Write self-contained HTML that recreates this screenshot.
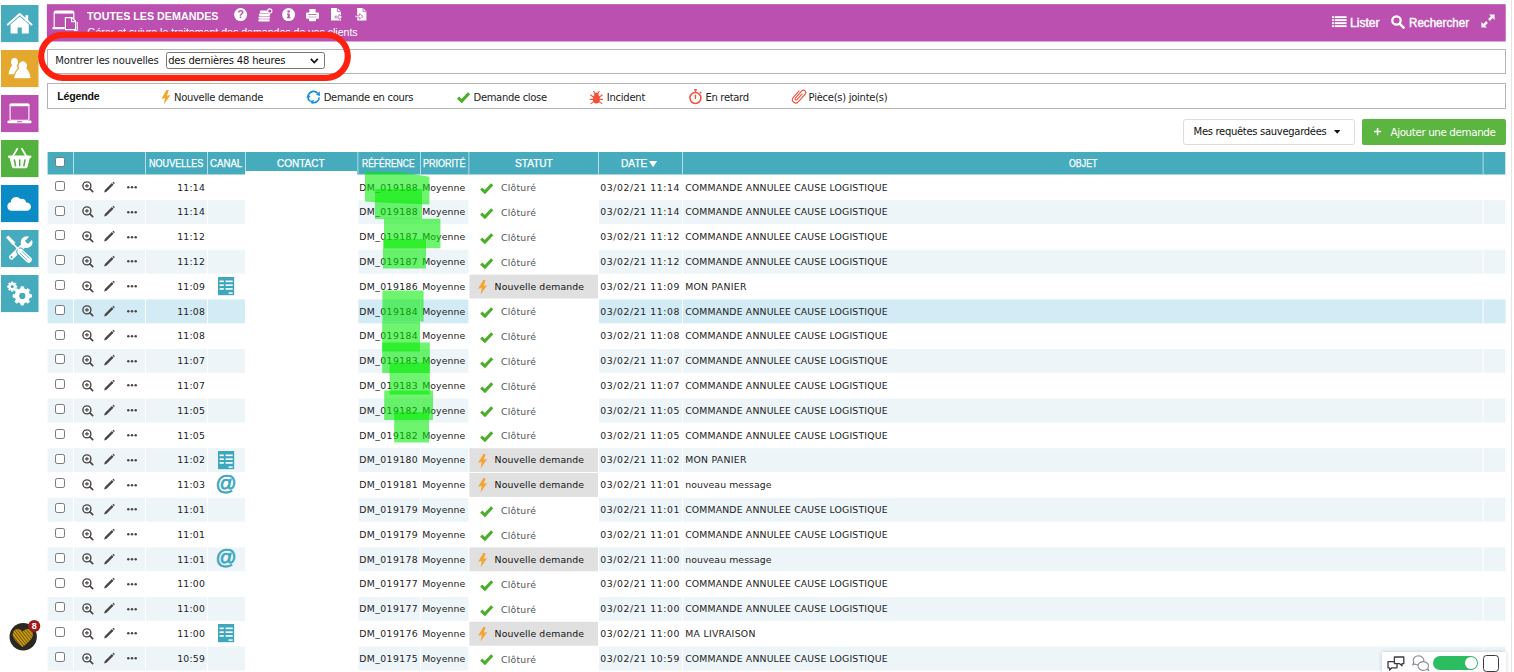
<!DOCTYPE html><html lang="fr"><head><meta charset="utf-8"><title>Toutes les demandes</title><style>html,body{margin:0;padding:0;background:#fff}body{width:1514px;height:672px;position:relative;overflow:hidden;font-family:"DejaVu Sans","Liberation Sans",sans-serif}.b{position:absolute}.t{position:absolute;white-space:nowrap;margin:0;padding:0}.i{position:absolute;overflow:visible}.cb{position:absolute;width:8.2px;height:8px;border:1.1px solid #7a7a7a;border-radius:2.2px;background:#fff}</style></head><body>
<nav>
<svg class="i" style="left:1.3px;top:5.20px" width="37.5" height="37.1" viewBox="0 0 37.5 37.1"><rect width="37.5" height="37.1" fill="#47abbe"/><path d="M6.9 19.6 L18.7 9 L30.5 19.6" fill="none" stroke="#fff" stroke-width="2" stroke-linecap="round" stroke-linejoin="round"/><path d="M9.6 19.4 L18.7 11.4 L27.8 19.4 V28.6 H20.8 V22.4 H16.6 V28.6 H9.6 Z" fill="#fff"/><rect x="24.4" y="10.2" width="2.8" height="6" fill="#fff"/></svg>
<svg class="i" style="left:1.3px;top:50.13px" width="37.5" height="37.1" viewBox="0 0 37.5 37.1"><rect width="37.5" height="37.1" fill="#e5a82e"/><g fill="#fff"><ellipse cx="13.5" cy="11.9" rx="3.5" ry="3.9"/><path d="M7.6 24.2 C8.2 20 9.4 17 11.6 15 L16 15 L17 19 L13 24.2 Z"/></g><g fill="#fff" stroke="#e5a82e" stroke-width="1.1"><path d="M12.4 28.7 C13.2 24 14.8 20.6 17.8 18.2 A4.7 4.8 0 1 1 25.8 18.2 C28.4 20.6 29.6 24 30.2 28.7 Z"/></g></svg>
<svg class="i" style="left:1.3px;top:95.06px" width="37.5" height="37.1" viewBox="0 0 37.5 37.1"><rect width="37.5" height="37.1" fill="#bb50b0"/><rect x="9.1" y="9.2" width="18.8" height="16" rx="1.2" fill="none" stroke="#fff" stroke-width="1.1"/><rect x="8.6" y="8.6" width="19.8" height="2.6" rx="0.8" fill="#fff"/><rect x="6.4" y="25.5" width="24.2" height="2.7" rx="1.3" fill="#fff"/><rect x="16" y="26.3" width="5" height="1" fill="#b94fb0"/></svg>
<svg class="i" style="left:1.3px;top:139.99px" width="37.5" height="37.1" viewBox="0 0 37.5 37.1"><rect width="37.5" height="37.1" fill="#53b13f"/><path d="M11.6 16.8 L16.3 8.7 M25.6 16.8 L20.9 8.7" stroke="#fff" stroke-width="1.7" stroke-linecap="round" fill="none"/><path d="M8.2 15.6 H29.2 a1.25 1.25 0 0 1 0 2.5 H28.8 L26.6 26.8 a2 2 0 0 1 -1.9 1.5 H12.7 a2 2 0 0 1 -1.9 -1.5 L8.6 18.1 H8.2 a1.25 1.25 0 0 1 0 -2.5 Z" fill="#fff"/><path d="M13.4 20 L14.5 25.6 M18.7 20 V25.6 M24 20 L22.9 25.6" stroke="#53b13f" stroke-width="1.6" stroke-linecap="round"/></svg>
<svg class="i" style="left:1.3px;top:184.92px" width="37.5" height="37.1" viewBox="0 0 37.5 37.1"><rect width="37.5" height="37.1" fill="#0a8bc6"/><path d="M10.4 25.8 a4.3 4.3 0 0 1 -0.6 -8.5 a5.4 5.4 0 0 1 9.6 -3.2 a4 4 0 0 1 5.6 3.4 a4.2 4.2 0 0 1 1.4 8.3 Z" fill="#fff"/></svg>
<svg class="i" style="left:1.3px;top:229.85px" width="37.5" height="37.1" viewBox="0 0 37.5 37.1"><rect width="37.5" height="37.1" fill="#47abbe"/><path d="M10.6 27 L23 15" stroke="#fff" stroke-width="5" stroke-linecap="round"/><circle cx="25.6" cy="12.2" r="5.9" fill="#fff"/><path d="M25.4 12.4 L31.4 6.4" stroke="#47abbe" stroke-width="4.2"/><circle cx="10.5" cy="27.1" r="1.1" fill="#47abbe"/><path d="M19.4 21.8 L27.8 29.8" stroke="#47abbe" stroke-width="8" stroke-linecap="round"/><path d="M19.4 21.8 L27.8 29.8" stroke="#fff" stroke-width="6" stroke-linecap="round"/><path d="M20.6 21 L28.4 28.4 M18.8 23 L26.4 30.2" stroke="#47abbe" stroke-width="0.8"/><path d="M12.4 14 L18.4 20.4" stroke="#fff" stroke-width="1.7"/><path d="M5.4 7.4 L7.4 6 L13.9 12.6 L12 14.8 Z" fill="#fff" stroke="#fff" stroke-width="0.8" stroke-linejoin="round"/></svg>
<svg class="i" style="left:1.3px;top:274.78px" width="37.5" height="37.1" viewBox="0 0 37.5 37.1"><rect width="37.5" height="37.1" fill="#47abbe"/><path d="M14.71 10.81 L15.86 10.97 L15.86 12.23 L14.71 12.39 L14.24 13.53 L14.94 14.45 L14.05 15.34 L13.13 14.64 L11.99 15.11 L11.83 16.26 L10.57 16.26 L10.41 15.11 L9.27 14.64 L8.35 15.34 L7.46 14.45 L8.16 13.53 L7.69 12.39 L6.54 12.23 L6.54 10.97 L7.69 10.81 L8.16 9.67 L7.46 8.75 L8.35 7.86 L9.27 8.56 L10.41 8.09 L10.57 6.94 L11.83 6.94 L11.99 8.09 L13.13 8.56 L14.05 7.86 L14.94 8.75 L14.24 9.67Z" fill="#fff" stroke="#fff" stroke-width="0.8" stroke-linejoin="round"/><circle cx="11.2" cy="11.6" r="1.6" fill="#47abbe"/><path d="M28.42 19.31 L30.52 19.66 L30.52 22.14 L28.42 22.49 L27.46 24.81 L28.69 26.54 L26.94 28.29 L25.21 27.06 L22.89 28.02 L22.54 30.12 L20.06 30.12 L19.71 28.02 L17.39 27.06 L15.66 28.29 L13.91 26.54 L15.14 24.81 L14.18 22.49 L12.08 22.14 L12.08 19.66 L14.18 19.31 L15.14 16.99 L13.91 15.26 L15.66 13.51 L17.39 14.74 L19.71 13.78 L20.06 11.68 L22.54 11.68 L22.89 13.78 L25.21 14.74 L26.94 13.51 L28.69 15.26 L27.46 16.99Z" fill="#fff" stroke="#fff" stroke-width="0.8" stroke-linejoin="round"/><circle cx="21.3" cy="20.9" r="3.1" fill="#47abbe"/></svg>
</nav>
<header>
<svg class="i" style="left:0;top:0" width="1514" height="44" viewBox="0 0 1514 44"><rect x="46.9" y="4.2" width="1458.8" height="37.3" fill="#bb50b0"/></svg>
<svg class="i" style="left:52.2px;top:10.4px" width="27" height="25" viewBox="0 0 27 25" ><rect x="2.2" y="1" width="19.6" height="17" rx="1.6" fill="none" stroke="#fff" stroke-width="1.2"/><rect x="2.2" y="1" width="19.6" height="2.6" fill="#fff"/><rect x="0.4" y="17" width="12" height="2.2" rx="1" fill="#fff"/><path d="M13.4 7.6 H20 L23.6 11.2 V19.6 H13.4 Z" fill="#b94fb0" stroke="#fff" stroke-width="1.2" stroke-linejoin="round"/><path d="M19.6 7.8 V11.6 H23.4" fill="none" stroke="#fff" stroke-width="1.1"/><path d="M25.3 12 V20.6 H22" fill="none" stroke="#fff" stroke-width="1"/></svg>
<div class="t" style="left:87.2px;top:8px;line-height:16px;height:16px;font:bold 11.8px/16px 'Liberation Sans', sans-serif;color:#fff;transform:scaleX(0.9091);transform-origin:0 50%;">TOUTES LES DEMANDES</div>
<div class="t" style="left:87.2px;top:25.4px;line-height:14px;height:14px;font:10.6px/14px 'Liberation Sans', sans-serif;color:#fff;letter-spacing:-0.007px;">Gérer et suivre le traitement des demandes de vos clients</div>
<svg class="i" style="left:233.8px;top:8.1px" width="13.2" height="13.2" viewBox="0 0 13.2 13.2" ><circle cx="6.6" cy="6.6" r="6.5" fill="#fff"/><text x="6.6" y="10.4" text-anchor="middle" font-family="Liberation Sans, sans-serif" font-weight="bold" font-size="10.5" fill="#b94fb0">?</text></svg>
<svg class="i" style="left:258.4px;top:7.6px" width="14.2" height="13.4" viewBox="-0.2 -0.4 14.2 13.4" ><g fill="#fff"><rect x="1.6" y="2.2" width="9" height="2.4" rx="1.2"/><rect x="0.6" y="5.2" width="11.4" height="2.3" rx="1.1"/><rect x="0.2" y="8" width="11.8" height="2.3" rx="1.1"/><rect x="0" y="10.8" width="11.6" height="2.3" rx="1.1"/></g><circle cx="11.6" cy="2.6" r="2.1" fill="#b94fb0" stroke="#fff" stroke-width="1.1"/></svg>
<svg class="i" style="left:281.9px;top:8.1px" width="13.2" height="13.2" viewBox="0 0 13.2 13.2" ><circle cx="6.6" cy="6.6" r="6.5" fill="#fff"/><circle cx="6.6" cy="3.5" r="1.25" fill="#b94fb0"/><path d="M5.1 5.6 H7.7 V9 H8.4 V10.3 H4.9 V9 H5.7 V6.9 H5.1 Z" fill="#b94fb0"/></svg>
<svg class="i" style="left:306px;top:8.8px" width="13" height="12.2" viewBox="0 0 13 12.2" ><g fill="#fff"><rect x="3.4" y="0" width="6.2" height="4" /><rect x="0" y="3.6" width="13" height="6.2" rx="0.8"/><rect x="3" y="8" width="7" height="4.2"/></g><rect x="2.4" y="5" width="8.2" height="1" fill="#b94fb0" opacity="0.8"/><rect x="2.6" y="7.6" width="7.8" height="0.8" fill="#b94fb0" opacity="0.6"/></svg>
<svg class="i" style="left:331px;top:8.4px" width="12" height="12.4" viewBox="0 0 12 12.4" ><path d="M0 0 H6.4 L10 3.6 V12.4 H0 Z" fill="#fff"/><path d="M6.4 0 V3.6 H10" fill="none" stroke="#b94fb0" stroke-width="0.8"/><path d="M4 8.2 H8 V6.4 L11.6 9 L8 11.6 V9.8 H4 Z" fill="#fff" stroke="#b94fb0" stroke-width="0.7"/></svg>
<svg class="i" style="left:354.8px;top:8.4px" width="12" height="12.4" viewBox="0 0 12 12.4" ><path d="M2.2 0 H8 L11.4 3.4 V12.4 H2.2 Z" fill="#fff"/><path d="M8 0 V3.4 H11.4" fill="none" stroke="#b94fb0" stroke-width="0.8"/><path d="M0 7.6 H4.4 V5.6 L8.2 8.4 L4.4 11.2 V9.2 H0 Z" fill="#fff" stroke="#b94fb0" stroke-width="0.7"/></svg>
<svg class="i" style="left:1331.5px;top:16.1px" width="14.8" height="11.4" viewBox="0 0 14.8 11.4" ><rect x="0" y="0.2" width="1.9" height="1.9" fill="#fff"/><rect x="2.7" y="0.2" width="11.9" height="1.9" fill="#fff"/><rect x="0" y="3.2" width="1.9" height="1.9" fill="#fff"/><rect x="2.7" y="3.2" width="11.9" height="1.9" fill="#fff"/><rect x="0" y="6.2" width="1.9" height="1.9" fill="#fff"/><rect x="2.7" y="6.2" width="11.9" height="1.9" fill="#fff"/><rect x="0" y="9.2" width="1.9" height="1.9" fill="#fff"/><rect x="2.7" y="9.2" width="11.9" height="1.9" fill="#fff"/></svg>
<div class="t" style="left:1349.6px;top:13.8px;line-height:18px;height:18px;font:12px/18px 'Liberation Sans', sans-serif;color:#fff;transform:scaleX(1.0087);transform-origin:0 50%;-webkit-text-stroke:0.4px #fff;">Lister</div>
<svg class="i" style="left:1391px;top:14.6px" width="13.4" height="13.4" viewBox="0 0 13.4 13.4" ><circle cx="5.5" cy="5.5" r="4.2" fill="none" stroke="#fff" stroke-width="2.3"/><path d="M8.8 8.8 L12.6 12.6" stroke="#fff" stroke-width="2.6" stroke-linecap="round"/></svg>
<div class="t" style="left:1408.8px;top:13.8px;line-height:18px;height:18px;font:12px/18px 'Liberation Sans', sans-serif;color:#fff;transform:scaleX(0.9673);transform-origin:0 50%;-webkit-text-stroke:0.4px #fff;">Rechercher</div>
<svg class="i" style="left:1481.2px;top:14.2px" width="14" height="14" viewBox="0 0 14 14" ><g fill="#fff"><path d="M8 0.4 H13.6 V6 L11.7 4.1 L8.9 6.9 L7.1 5.1 L9.9 2.3 Z"/><path d="M6 13.6 H0.4 V8 L2.3 9.9 L5.1 7.1 L6.9 8.9 L4.1 11.7 Z"/></g></svg>
</header>
<section>
<div class="b" style="left:47.00px;top:48.70px;width:1457.00px;height:23.60px;background:#fff;border:1px solid #b4b4b4"></div>
<div class="t" style="left:55.3px;top:52.2px;line-height:17px;height:17px;font:10.0px/17px 'DejaVu Sans', 'Liberation Sans', sans-serif;color:#222;letter-spacing:-0.198px;">Montrer les nouvelles</div>
<div class="b" style="left:165.60px;top:52.20px;width:157.00px;height:14.60px;background:#fff;border:1px solid #777;border-radius:2.5px"></div>
<div class="t" style="left:168.2px;top:52.2px;line-height:17px;height:17px;font:10.0px/17px 'DejaVu Sans', 'Liberation Sans', sans-serif;color:#111;letter-spacing:-0.175px;">des dernières 48 heures</div>
<svg class="i" style="left:310.2px;top:57.6px" width="8.6" height="6" viewBox="0 0 8.6 6" ><path d="M0.8 0.9 L4.3 4.5 L7.8 0.9" fill="none" stroke="#111" stroke-width="1.7"/></svg>
</section>
<section>
<div class="b" style="left:47.00px;top:83.20px;width:1456.60px;height:23.80px;background:#fff;border:1px solid #b4b4b4"></div>
<div class="t" style="left:57.2px;top:87.6px;line-height:17px;height:17px;font:bold 10.6px/17px 'Liberation Sans', sans-serif;color:#111;letter-spacing:-0.166px;">Légende</div>
<svg class="i" style="left:160.5px;top:89.8px" width="9.8" height="14.4" viewBox="0 0 9.4 14.4" ><path d="M5.4 0 H7.6 L5.8 5.7 L9.3 5.1 L2.6 14.4 L3.8 8.1 L0.1 8.8 Z" fill="#f3a530"/></svg>
<div class="t" style="left:174px;top:88.8px;line-height:17px;height:17px;font:10.0px/17px 'DejaVu Sans', 'Liberation Sans', sans-serif;color:#222;letter-spacing:-0.319px;">Nouvelle demande</div>
<svg class="i" style="left:305.9px;top:90.2px" width="14.4" height="14.4" viewBox="-0.4 0 14.2 14.2" ><g fill="none" stroke="#1b8fd8" stroke-width="1.7"><path d="M2.2 4.6 A5.3 5.3 0 0 1 11.2 3.2"/><path d="M12.6 7.4 A5.3 5.3 0 0 1 6 12.2"/><path d="M3.6 11 A5.3 5.3 0 0 1 1.6 6.6"/></g><g fill="#1b8fd8"><path d="M9.4 4.6 L13.2 1.4 L13.4 6 Z"/><path d="M7.6 9.8 L5.8 14 L3.4 10.8 Z"/><path d="M0 8 L1.4 3.6 L4.2 7 Z"/></g></svg>
<div class="t" style="left:323.7px;top:88.8px;line-height:17px;height:17px;font:10.0px/17px 'DejaVu Sans', 'Liberation Sans', sans-serif;color:#222;letter-spacing:-0.33px;">Demande en cours</div>
<svg class="i" style="left:456.6px;top:92px" width="13" height="10.6" viewBox="0 0 13 10.6" ><path d="M1 5.6 L4.7 9.1 L12 1.2" fill="none" stroke="#4aae2a" stroke-width="3.1" stroke-linecap="butt" stroke-linejoin="miter"/></svg>
<div class="t" style="left:473.5px;top:88.8px;line-height:17px;height:17px;font:10.0px/17px 'DejaVu Sans', 'Liberation Sans', sans-serif;color:#222;letter-spacing:-0.323px;">Demande close</div>
<svg class="i" style="left:590.1px;top:91px" width="12.8" height="13.2" viewBox="0 0 12.8 13.2" ><ellipse cx="6.4" cy="8" rx="3.5" ry="4.6" fill="#f4503a"/><circle cx="6.4" cy="3.6" r="2.2" fill="#f4503a"/><g stroke="#f4503a" stroke-width="1.1" fill="none" stroke-linecap="round"><path d="M4.8 2.2 L3.6 0.4 M8 2.2 L9.2 0.4"/><path d="M3.4 6 L0.6 4 M9.4 6 L12.2 4"/><path d="M3 8.4 H0.2 M9.8 8.4 H12.6"/><path d="M3.6 10.6 L1 12.6 M9.2 10.6 L11.8 12.6"/></g></svg>
<div class="t" style="left:606.7px;top:88.8px;line-height:17px;height:17px;font:10.0px/17px 'DejaVu Sans', 'Liberation Sans', sans-serif;color:#222;letter-spacing:-0.241px;">Incident</div>
<svg class="i" style="left:688.8px;top:88.8px" width="12.8" height="15.2" viewBox="0 0 12.8 15.2" ><circle cx="6.4" cy="9" r="5.5" fill="none" stroke="#f4503a" stroke-width="1.5"/><rect x="5.2" y="0" width="2.6" height="1.6" fill="#f4503a"/><rect x="5.9" y="1.2" width="1.2" height="2" fill="#f4503a"/><path d="M11 3 L12.2 4.2" stroke="#f4503a" stroke-width="1.3"/><rect x="5.8" y="5.6" width="1.3" height="4.6" rx="0.6" fill="#f4503a"/></svg>
<div class="t" style="left:705.5px;top:88.8px;line-height:17px;height:17px;font:10.0px/17px 'DejaVu Sans', 'Liberation Sans', sans-serif;color:#222;letter-spacing:-0.335px;">En retard</div>
<svg class="i" style="left:791.2px;top:90px" width="14.8" height="13.6" viewBox="0 0 14.8 13.6" ><g transform="rotate(42 7.4 6.8)" fill="none" stroke="#f4503a" stroke-width="1.1"><path d="M4 1.6 V10.6 a3.3 3.3 0 0 0 6.6 0 V0.2 a2.3 2.3 0 0 0 -4.6 0 V9.8 a1.1 1.1 0 0 0 2.2 0 V1.8"/></g></svg>
<div class="t" style="left:808.6px;top:88.8px;line-height:17px;height:17px;font:10.0px/17px 'DejaVu Sans', 'Liberation Sans', sans-serif;color:#222;letter-spacing:-0.272px;">Pièce(s) jointe(s)</div>
</section>
<div class="b" style="left:1183.20px;top:118.60px;width:169.60px;height:24.20px;background:#fff;border:1px solid #dcdcdc;border-radius:3px"></div>
<div class="t" style="left:1193.6px;top:122.9px;line-height:18px;height:18px;font:10.0px/18px 'DejaVu Sans', 'Liberation Sans', sans-serif;color:#111;letter-spacing:-0.31px;">Mes requêtes sauvegardées</div>
<svg class="i" style="left:1334.4px;top:130px" width="6.4" height="3.8" viewBox="0 0 6.4 3.8" ><path d="M0 0 H6.4 L3.2 3.8 Z" fill="#111"/></svg>
<div class="b" style="left:1362.00px;top:118.60px;width:143.60px;height:26.00px;background:#5cb441;border-radius:2px"></div>
<svg class="i" style="left:1374px;top:128.4px" width="7.2" height="7.2" viewBox="0 0 7.2 7.2" ><path d="M3.6 0 V7.2 M0 3.6 H7.2" stroke="#fff" stroke-width="1.5"/></svg>
<div class="t" style="left:1390.5px;top:122.8px;line-height:18px;height:18px;font:10.4px/18px 'DejaVu Sans', 'Liberation Sans', sans-serif;color:#fff;letter-spacing:-0.416px;">Ajouter une demande</div>
<main>
<svg class="i" style="left:0;top:0" width="1514" height="672" viewBox="0 0 1514 672">
<rect x="47.6" y="152" width="1457.7" height="22.5" fill="#47abbe"/>
<rect x="73" y="152" width="1" height="22.5" fill="#b5dde6"/>
<rect x="145" y="152" width="1" height="22.5" fill="#b5dde6"/>
<rect x="207" y="152" width="1" height="22.5" fill="#b5dde6"/>
<rect x="245" y="152" width="1" height="22.5" fill="#b5dde6"/>
<rect x="357.4" y="152" width="1" height="22.5" fill="#b5dde6"/>
<rect x="420" y="152" width="1" height="22.5" fill="#b5dde6"/>
<rect x="468.4" y="152" width="1" height="22.5" fill="#b5dde6"/>
<rect x="598" y="152" width="1" height="22.5" fill="#b5dde6"/>
<rect x="682" y="152" width="1" height="22.5" fill="#b5dde6"/>
<rect x="1482.6" y="152" width="1" height="22.5" fill="#b5dde6"/>
<rect x="47.6" y="200.20" width="25.40" height="23.9" fill="#edf5f8"/>
<rect x="74" y="200.20" width="71.00" height="23.9" fill="#edf5f8"/>
<rect x="146" y="200.20" width="61.00" height="23.9" fill="#edf5f8"/>
<rect x="208" y="200.20" width="37.00" height="23.9" fill="#edf5f8"/>
<rect x="358.4" y="200.20" width="61.60" height="23.9" fill="#edf5f8"/>
<rect x="421" y="200.20" width="47.40" height="23.9" fill="#edf5f8"/>
<rect x="599" y="200.20" width="83.00" height="23.9" fill="#edf5f8"/>
<rect x="683" y="200.20" width="799.60" height="23.9" fill="#edf5f8"/>
<rect x="1483.6" y="200.20" width="22.00" height="23.9" fill="#edf5f8"/>
<rect x="47.6" y="249.80" width="25.40" height="23.9" fill="#edf5f8"/>
<rect x="74" y="249.80" width="71.00" height="23.9" fill="#edf5f8"/>
<rect x="146" y="249.80" width="61.00" height="23.9" fill="#edf5f8"/>
<rect x="208" y="249.80" width="37.00" height="23.9" fill="#edf5f8"/>
<rect x="358.4" y="249.80" width="61.60" height="23.9" fill="#edf5f8"/>
<rect x="421" y="249.80" width="47.40" height="23.9" fill="#edf5f8"/>
<rect x="599" y="249.80" width="83.00" height="23.9" fill="#edf5f8"/>
<rect x="683" y="249.80" width="799.60" height="23.9" fill="#edf5f8"/>
<rect x="1483.6" y="249.80" width="22.00" height="23.9" fill="#edf5f8"/>
<rect x="469.4" y="274.60" width="128.60" height="23.9" fill="#e0e0e0"/>
<rect x="47.6" y="299.40" width="25.40" height="23.9" fill="#d3ebf5"/>
<rect x="74" y="299.40" width="71.00" height="23.9" fill="#d3ebf5"/>
<rect x="146" y="299.40" width="61.00" height="23.9" fill="#d3ebf5"/>
<rect x="208" y="299.40" width="37.00" height="23.9" fill="#d3ebf5"/>
<rect x="358.4" y="299.40" width="61.60" height="23.9" fill="#d3ebf5"/>
<rect x="421" y="299.40" width="47.40" height="23.9" fill="#d3ebf5"/>
<rect x="599" y="299.40" width="83.00" height="23.9" fill="#d3ebf5"/>
<rect x="683" y="299.40" width="799.60" height="23.9" fill="#d3ebf5"/>
<rect x="1483.6" y="299.40" width="22.00" height="23.9" fill="#d3ebf5"/>
<rect x="47.6" y="349.00" width="25.40" height="23.9" fill="#edf5f8"/>
<rect x="74" y="349.00" width="71.00" height="23.9" fill="#edf5f8"/>
<rect x="146" y="349.00" width="61.00" height="23.9" fill="#edf5f8"/>
<rect x="208" y="349.00" width="37.00" height="23.9" fill="#edf5f8"/>
<rect x="358.4" y="349.00" width="61.60" height="23.9" fill="#edf5f8"/>
<rect x="421" y="349.00" width="47.40" height="23.9" fill="#edf5f8"/>
<rect x="599" y="349.00" width="83.00" height="23.9" fill="#edf5f8"/>
<rect x="683" y="349.00" width="799.60" height="23.9" fill="#edf5f8"/>
<rect x="1483.6" y="349.00" width="22.00" height="23.9" fill="#edf5f8"/>
<rect x="47.6" y="398.60" width="25.40" height="23.9" fill="#edf5f8"/>
<rect x="74" y="398.60" width="71.00" height="23.9" fill="#edf5f8"/>
<rect x="146" y="398.60" width="61.00" height="23.9" fill="#edf5f8"/>
<rect x="208" y="398.60" width="37.00" height="23.9" fill="#edf5f8"/>
<rect x="358.4" y="398.60" width="61.60" height="23.9" fill="#edf5f8"/>
<rect x="421" y="398.60" width="47.40" height="23.9" fill="#edf5f8"/>
<rect x="599" y="398.60" width="83.00" height="23.9" fill="#edf5f8"/>
<rect x="683" y="398.60" width="799.60" height="23.9" fill="#edf5f8"/>
<rect x="1483.6" y="398.60" width="22.00" height="23.9" fill="#edf5f8"/>
<rect x="47.6" y="448.20" width="25.40" height="23.9" fill="#edf5f8"/>
<rect x="74" y="448.20" width="71.00" height="23.9" fill="#edf5f8"/>
<rect x="146" y="448.20" width="61.00" height="23.9" fill="#edf5f8"/>
<rect x="208" y="448.20" width="37.00" height="23.9" fill="#edf5f8"/>
<rect x="358.4" y="448.20" width="61.60" height="23.9" fill="#edf5f8"/>
<rect x="421" y="448.20" width="47.40" height="23.9" fill="#edf5f8"/>
<rect x="469.4" y="448.20" width="128.60" height="23.9" fill="#e0e0e0"/>
<rect x="599" y="448.20" width="83.00" height="23.9" fill="#edf5f8"/>
<rect x="683" y="448.20" width="799.60" height="23.9" fill="#edf5f8"/>
<rect x="1483.6" y="448.20" width="22.00" height="23.9" fill="#edf5f8"/>
<rect x="469.4" y="473.00" width="128.60" height="23.9" fill="#e0e0e0"/>
<rect x="47.6" y="497.80" width="25.40" height="23.9" fill="#edf5f8"/>
<rect x="74" y="497.80" width="71.00" height="23.9" fill="#edf5f8"/>
<rect x="146" y="497.80" width="61.00" height="23.9" fill="#edf5f8"/>
<rect x="208" y="497.80" width="37.00" height="23.9" fill="#edf5f8"/>
<rect x="358.4" y="497.80" width="61.60" height="23.9" fill="#edf5f8"/>
<rect x="421" y="497.80" width="47.40" height="23.9" fill="#edf5f8"/>
<rect x="599" y="497.80" width="83.00" height="23.9" fill="#edf5f8"/>
<rect x="683" y="497.80" width="799.60" height="23.9" fill="#edf5f8"/>
<rect x="1483.6" y="497.80" width="22.00" height="23.9" fill="#edf5f8"/>
<rect x="47.6" y="547.40" width="25.40" height="23.9" fill="#edf5f8"/>
<rect x="74" y="547.40" width="71.00" height="23.9" fill="#edf5f8"/>
<rect x="146" y="547.40" width="61.00" height="23.9" fill="#edf5f8"/>
<rect x="208" y="547.40" width="37.00" height="23.9" fill="#edf5f8"/>
<rect x="358.4" y="547.40" width="61.60" height="23.9" fill="#edf5f8"/>
<rect x="421" y="547.40" width="47.40" height="23.9" fill="#edf5f8"/>
<rect x="469.4" y="547.40" width="128.60" height="23.9" fill="#e0e0e0"/>
<rect x="599" y="547.40" width="83.00" height="23.9" fill="#edf5f8"/>
<rect x="683" y="547.40" width="799.60" height="23.9" fill="#edf5f8"/>
<rect x="1483.6" y="547.40" width="22.00" height="23.9" fill="#edf5f8"/>
<rect x="47.6" y="597.00" width="25.40" height="23.9" fill="#edf5f8"/>
<rect x="74" y="597.00" width="71.00" height="23.9" fill="#edf5f8"/>
<rect x="146" y="597.00" width="61.00" height="23.9" fill="#edf5f8"/>
<rect x="208" y="597.00" width="37.00" height="23.9" fill="#edf5f8"/>
<rect x="358.4" y="597.00" width="61.60" height="23.9" fill="#edf5f8"/>
<rect x="421" y="597.00" width="47.40" height="23.9" fill="#edf5f8"/>
<rect x="599" y="597.00" width="83.00" height="23.9" fill="#edf5f8"/>
<rect x="683" y="597.00" width="799.60" height="23.9" fill="#edf5f8"/>
<rect x="1483.6" y="597.00" width="22.00" height="23.9" fill="#edf5f8"/>
<rect x="469.4" y="621.80" width="128.60" height="23.9" fill="#e0e0e0"/>
<rect x="47.6" y="646.60" width="25.40" height="23.9" fill="#edf5f8"/>
<rect x="74" y="646.60" width="71.00" height="23.9" fill="#edf5f8"/>
<rect x="146" y="646.60" width="61.00" height="23.9" fill="#edf5f8"/>
<rect x="208" y="646.60" width="37.00" height="23.9" fill="#edf5f8"/>
<rect x="358.4" y="646.60" width="61.60" height="23.9" fill="#edf5f8"/>
<rect x="421" y="646.60" width="47.40" height="23.9" fill="#edf5f8"/>
<rect x="599" y="646.60" width="83.00" height="23.9" fill="#edf5f8"/>
<rect x="683" y="646.60" width="799.60" height="23.9" fill="#edf5f8"/>
<rect x="1483.6" y="646.60" width="22.00" height="23.9" fill="#edf5f8"/>
</svg>
<div class="cb" style="left:55.3px;top:157.2px"></div>
<div class="t" style="left:149px;top:155px;line-height:18px;height:18px;font:10px/18px 'Liberation Sans', sans-serif;color:#fff;transform:scaleX(0.9062);transform-origin:0 50%;-webkit-text-stroke:0.25px #fff;">NOUVELLES</div>
<div class="t" style="left:210.2px;top:155px;line-height:18px;height:18px;font:10px/18px 'Liberation Sans', sans-serif;color:#fff;transform:scaleX(0.9652);transform-origin:0 50%;-webkit-text-stroke:0.25px #fff;">CANAL</div>
<div class="t" style="left:277.4px;top:155px;line-height:18px;height:18px;font:10px/18px 'Liberation Sans', sans-serif;color:#fff;transform:scaleX(1.0001);transform-origin:0 50%;-webkit-text-stroke:0.25px #fff;">CONTACT</div>
<div class="t" style="left:361.9px;top:155px;line-height:18px;height:18px;font:10px/18px 'Liberation Sans', sans-serif;color:#fff;transform:scaleX(0.8527);transform-origin:0 50%;-webkit-text-stroke:0.25px #fff;">RÉFÉRENCE</div>
<div class="t" style="left:422.6px;top:155px;line-height:18px;height:18px;font:10px/18px 'Liberation Sans', sans-serif;color:#fff;transform:scaleX(0.9019);transform-origin:0 50%;-webkit-text-stroke:0.25px #fff;">PRIORITÉ</div>
<div class="t" style="left:514.5px;top:155px;line-height:18px;height:18px;font:10px/18px 'Liberation Sans', sans-serif;color:#fff;transform:scaleX(1.0105);transform-origin:0 50%;-webkit-text-stroke:0.25px #fff;">STATUT</div>
<div class="t" style="left:621px;top:155px;line-height:18px;height:18px;font:10px/18px 'Liberation Sans', sans-serif;color:#fff;transform:scaleX(1.0178);transform-origin:0 50%;-webkit-text-stroke:0.25px #fff;">DATE</div>
<div class="t" style="left:1068.5px;top:155px;line-height:18px;height:18px;font:10px/18px 'Liberation Sans', sans-serif;color:#fff;transform:scaleX(0.881);transform-origin:0 50%;-webkit-text-stroke:0.25px #fff;">OBJET</div>
<svg class="i" style="left:649.2px;top:161.2px" width="8.2" height="6.2" viewBox="0 0 8.2 6.2" ><path d="M0 0 H8.2 L4.1 6.2 Z" fill="#fff"/></svg>
<div>
<div class="cb" style="left:55.3px;top:180.70px"></div>
<svg class="i" style="left:81.6px;top:181.4px" width="11.4" height="11.4" viewBox="0 0 11.4 11.4" ><circle cx="4.9" cy="4.9" r="4" fill="none" stroke="#4b4544" stroke-width="1.4"/><path d="M7.9 7.9 L10.7 10.6" stroke="#4b4544" stroke-width="1.7" stroke-linecap="round"/><path d="M3 4.9 H6.8 M4.9 3 V6.8" stroke="#4b4544" stroke-width="1.1"/></svg>
<svg class="i" style="left:103.8px;top:181.5px" width="11" height="10.6" viewBox="0 0 11 10.6" ><path d="M0.1 10.5 L0.9 8.1 L7.9 1.1 L9.5 2.7 L2.5 9.7 Z" fill="#4b4544"/><path d="M8.5 0.6 L9.1 0 a0.5 0.5 0 0 1 0.7 0 L10.6 0.9 a0.5 0.5 0 0 1 0 0.7 L10 2.2 Z" fill="#4b4544"/></svg>
<svg class="i" style="left:126.9px;top:185.9px" width="10" height="2.6" viewBox="0 0 10 2.6" ><circle cx="1.3" cy="1.3" r="1.25" fill="#4b4544"/><circle cx="5.0" cy="1.3" r="1.25" fill="#4b4544"/><circle cx="8.700000000000001" cy="1.3" r="1.25" fill="#4b4544"/></svg>
<div class="t" style="left:177.2px;top:178.6px;line-height:18px;height:18px;font:9.3px/18px 'DejaVu Sans', 'Liberation Sans', sans-serif;color:#222;letter-spacing:0.241px;">11:14</div>
<div class="t" style="left:359.2px;top:178.6px;line-height:18px;height:18px;font:9.3px/18px 'DejaVu Sans', 'Liberation Sans', sans-serif;color:#222;letter-spacing:0.408px;">DM_019188</div>
<div class="t" style="left:422.2px;top:178.6px;line-height:18px;height:18px;font:9.3px/18px 'DejaVu Sans', 'Liberation Sans', sans-serif;color:#222;letter-spacing:0.109px;">Moyenne</div>
<svg class="i" style="left:480px;top:183.2px" width="13.4" height="10.6" viewBox="0 0 13 10.6" ><path d="M1 5.6 L4.7 9.1 L12 1.2" fill="none" stroke="#4aae2a" stroke-width="3.1" stroke-linecap="butt" stroke-linejoin="miter"/></svg>
<div class="t" style="left:501px;top:179.3px;line-height:18px;height:18px;font:9.3px/18px 'DejaVu Sans', 'Liberation Sans', sans-serif;color:#555;letter-spacing:0.223px;">Clôturé</div>
<div class="t" style="left:600.2px;top:178.6px;line-height:18px;height:18px;font:9.3px/18px 'DejaVu Sans', 'Liberation Sans', sans-serif;color:#222;letter-spacing:0.592px;">03/02/21 11:14</div>
<div class="t" style="left:685.2px;top:178.6px;line-height:18px;height:18px;font:9.3px/18px 'DejaVu Sans', 'Liberation Sans', sans-serif;color:#222;letter-spacing:0.169px;">COMMANDE ANNULEE CAUSE LOGISTIQUE</div>
</div>
<div>
<div class="cb" style="left:55.3px;top:205.50px"></div>
<svg class="i" style="left:81.6px;top:206.2px" width="11.4" height="11.4" viewBox="0 0 11.4 11.4" ><circle cx="4.9" cy="4.9" r="4" fill="none" stroke="#4b4544" stroke-width="1.4"/><path d="M7.9 7.9 L10.7 10.6" stroke="#4b4544" stroke-width="1.7" stroke-linecap="round"/><path d="M3 4.9 H6.8 M4.9 3 V6.8" stroke="#4b4544" stroke-width="1.1"/></svg>
<svg class="i" style="left:103.8px;top:206.3px" width="11" height="10.6" viewBox="0 0 11 10.6" ><path d="M0.1 10.5 L0.9 8.1 L7.9 1.1 L9.5 2.7 L2.5 9.7 Z" fill="#4b4544"/><path d="M8.5 0.6 L9.1 0 a0.5 0.5 0 0 1 0.7 0 L10.6 0.9 a0.5 0.5 0 0 1 0 0.7 L10 2.2 Z" fill="#4b4544"/></svg>
<svg class="i" style="left:126.9px;top:210.7px" width="10" height="2.6" viewBox="0 0 10 2.6" ><circle cx="1.3" cy="1.3" r="1.25" fill="#4b4544"/><circle cx="5.0" cy="1.3" r="1.25" fill="#4b4544"/><circle cx="8.700000000000001" cy="1.3" r="1.25" fill="#4b4544"/></svg>
<div class="t" style="left:177.2px;top:203.4px;line-height:18px;height:18px;font:9.3px/18px 'DejaVu Sans', 'Liberation Sans', sans-serif;color:#222;letter-spacing:0.241px;">11:14</div>
<div class="t" style="left:359.2px;top:203.4px;line-height:18px;height:18px;font:9.3px/18px 'DejaVu Sans', 'Liberation Sans', sans-serif;color:#222;letter-spacing:0.408px;">DM_019188</div>
<div class="t" style="left:422.2px;top:203.4px;line-height:18px;height:18px;font:9.3px/18px 'DejaVu Sans', 'Liberation Sans', sans-serif;color:#222;letter-spacing:0.109px;">Moyenne</div>
<svg class="i" style="left:480px;top:208.0px" width="13.4" height="10.6" viewBox="0 0 13 10.6" ><path d="M1 5.6 L4.7 9.1 L12 1.2" fill="none" stroke="#4aae2a" stroke-width="3.1" stroke-linecap="butt" stroke-linejoin="miter"/></svg>
<div class="t" style="left:501px;top:204.1px;line-height:18px;height:18px;font:9.3px/18px 'DejaVu Sans', 'Liberation Sans', sans-serif;color:#555;letter-spacing:0.223px;">Clôturé</div>
<div class="t" style="left:600.2px;top:203.4px;line-height:18px;height:18px;font:9.3px/18px 'DejaVu Sans', 'Liberation Sans', sans-serif;color:#222;letter-spacing:0.592px;">03/02/21 11:14</div>
<div class="t" style="left:685.2px;top:203.4px;line-height:18px;height:18px;font:9.3px/18px 'DejaVu Sans', 'Liberation Sans', sans-serif;color:#222;letter-spacing:0.169px;">COMMANDE ANNULEE CAUSE LOGISTIQUE</div>
</div>
<div>
<div class="cb" style="left:55.3px;top:230.30px"></div>
<svg class="i" style="left:81.6px;top:231.0px" width="11.4" height="11.4" viewBox="0 0 11.4 11.4" ><circle cx="4.9" cy="4.9" r="4" fill="none" stroke="#4b4544" stroke-width="1.4"/><path d="M7.9 7.9 L10.7 10.6" stroke="#4b4544" stroke-width="1.7" stroke-linecap="round"/><path d="M3 4.9 H6.8 M4.9 3 V6.8" stroke="#4b4544" stroke-width="1.1"/></svg>
<svg class="i" style="left:103.8px;top:231.1px" width="11" height="10.6" viewBox="0 0 11 10.6" ><path d="M0.1 10.5 L0.9 8.1 L7.9 1.1 L9.5 2.7 L2.5 9.7 Z" fill="#4b4544"/><path d="M8.5 0.6 L9.1 0 a0.5 0.5 0 0 1 0.7 0 L10.6 0.9 a0.5 0.5 0 0 1 0 0.7 L10 2.2 Z" fill="#4b4544"/></svg>
<svg class="i" style="left:126.9px;top:235.5px" width="10" height="2.6" viewBox="0 0 10 2.6" ><circle cx="1.3" cy="1.3" r="1.25" fill="#4b4544"/><circle cx="5.0" cy="1.3" r="1.25" fill="#4b4544"/><circle cx="8.700000000000001" cy="1.3" r="1.25" fill="#4b4544"/></svg>
<div class="t" style="left:177.2px;top:228.2px;line-height:18px;height:18px;font:9.3px/18px 'DejaVu Sans', 'Liberation Sans', sans-serif;color:#222;letter-spacing:0.241px;">11:12</div>
<div class="t" style="left:359.2px;top:228.2px;line-height:18px;height:18px;font:9.3px/18px 'DejaVu Sans', 'Liberation Sans', sans-serif;color:#222;letter-spacing:0.408px;">DM_019187</div>
<div class="t" style="left:422.2px;top:228.2px;line-height:18px;height:18px;font:9.3px/18px 'DejaVu Sans', 'Liberation Sans', sans-serif;color:#222;letter-spacing:0.109px;">Moyenne</div>
<svg class="i" style="left:480px;top:232.8px" width="13.4" height="10.6" viewBox="0 0 13 10.6" ><path d="M1 5.6 L4.7 9.1 L12 1.2" fill="none" stroke="#4aae2a" stroke-width="3.1" stroke-linecap="butt" stroke-linejoin="miter"/></svg>
<div class="t" style="left:501px;top:228.9px;line-height:18px;height:18px;font:9.3px/18px 'DejaVu Sans', 'Liberation Sans', sans-serif;color:#555;letter-spacing:0.223px;">Clôturé</div>
<div class="t" style="left:600.2px;top:228.2px;line-height:18px;height:18px;font:9.3px/18px 'DejaVu Sans', 'Liberation Sans', sans-serif;color:#222;letter-spacing:0.592px;">03/02/21 11:12</div>
<div class="t" style="left:685.2px;top:228.2px;line-height:18px;height:18px;font:9.3px/18px 'DejaVu Sans', 'Liberation Sans', sans-serif;color:#222;letter-spacing:0.169px;">COMMANDE ANNULEE CAUSE LOGISTIQUE</div>
</div>
<div>
<div class="cb" style="left:55.3px;top:255.10px"></div>
<svg class="i" style="left:81.6px;top:255.8px" width="11.4" height="11.4" viewBox="0 0 11.4 11.4" ><circle cx="4.9" cy="4.9" r="4" fill="none" stroke="#4b4544" stroke-width="1.4"/><path d="M7.9 7.9 L10.7 10.6" stroke="#4b4544" stroke-width="1.7" stroke-linecap="round"/><path d="M3 4.9 H6.8 M4.9 3 V6.8" stroke="#4b4544" stroke-width="1.1"/></svg>
<svg class="i" style="left:103.8px;top:255.9px" width="11" height="10.6" viewBox="0 0 11 10.6" ><path d="M0.1 10.5 L0.9 8.1 L7.9 1.1 L9.5 2.7 L2.5 9.7 Z" fill="#4b4544"/><path d="M8.5 0.6 L9.1 0 a0.5 0.5 0 0 1 0.7 0 L10.6 0.9 a0.5 0.5 0 0 1 0 0.7 L10 2.2 Z" fill="#4b4544"/></svg>
<svg class="i" style="left:126.9px;top:260.3px" width="10" height="2.6" viewBox="0 0 10 2.6" ><circle cx="1.3" cy="1.3" r="1.25" fill="#4b4544"/><circle cx="5.0" cy="1.3" r="1.25" fill="#4b4544"/><circle cx="8.700000000000001" cy="1.3" r="1.25" fill="#4b4544"/></svg>
<div class="t" style="left:177.2px;top:253.0px;line-height:18px;height:18px;font:9.3px/18px 'DejaVu Sans', 'Liberation Sans', sans-serif;color:#222;letter-spacing:0.241px;">11:12</div>
<div class="t" style="left:359.2px;top:253.0px;line-height:18px;height:18px;font:9.3px/18px 'DejaVu Sans', 'Liberation Sans', sans-serif;color:#222;letter-spacing:0.408px;">DM_019187</div>
<div class="t" style="left:422.2px;top:253.0px;line-height:18px;height:18px;font:9.3px/18px 'DejaVu Sans', 'Liberation Sans', sans-serif;color:#222;letter-spacing:0.109px;">Moyenne</div>
<svg class="i" style="left:480px;top:257.6px" width="13.4" height="10.6" viewBox="0 0 13 10.6" ><path d="M1 5.6 L4.7 9.1 L12 1.2" fill="none" stroke="#4aae2a" stroke-width="3.1" stroke-linecap="butt" stroke-linejoin="miter"/></svg>
<div class="t" style="left:501px;top:253.7px;line-height:18px;height:18px;font:9.3px/18px 'DejaVu Sans', 'Liberation Sans', sans-serif;color:#555;letter-spacing:0.223px;">Clôturé</div>
<div class="t" style="left:600.2px;top:253.0px;line-height:18px;height:18px;font:9.3px/18px 'DejaVu Sans', 'Liberation Sans', sans-serif;color:#222;letter-spacing:0.592px;">03/02/21 11:12</div>
<div class="t" style="left:685.2px;top:253.0px;line-height:18px;height:18px;font:9.3px/18px 'DejaVu Sans', 'Liberation Sans', sans-serif;color:#222;letter-spacing:0.169px;">COMMANDE ANNULEE CAUSE LOGISTIQUE</div>
</div>
<div>
<div class="cb" style="left:55.3px;top:279.90px"></div>
<svg class="i" style="left:81.6px;top:280.6px" width="11.4" height="11.4" viewBox="0 0 11.4 11.4" ><circle cx="4.9" cy="4.9" r="4" fill="none" stroke="#4b4544" stroke-width="1.4"/><path d="M7.9 7.9 L10.7 10.6" stroke="#4b4544" stroke-width="1.7" stroke-linecap="round"/><path d="M3 4.9 H6.8 M4.9 3 V6.8" stroke="#4b4544" stroke-width="1.1"/></svg>
<svg class="i" style="left:103.8px;top:280.7px" width="11" height="10.6" viewBox="0 0 11 10.6" ><path d="M0.1 10.5 L0.9 8.1 L7.9 1.1 L9.5 2.7 L2.5 9.7 Z" fill="#4b4544"/><path d="M8.5 0.6 L9.1 0 a0.5 0.5 0 0 1 0.7 0 L10.6 0.9 a0.5 0.5 0 0 1 0 0.7 L10 2.2 Z" fill="#4b4544"/></svg>
<svg class="i" style="left:126.9px;top:285.1px" width="10" height="2.6" viewBox="0 0 10 2.6" ><circle cx="1.3" cy="1.3" r="1.25" fill="#4b4544"/><circle cx="5.0" cy="1.3" r="1.25" fill="#4b4544"/><circle cx="8.700000000000001" cy="1.3" r="1.25" fill="#4b4544"/></svg>
<div class="t" style="left:177.2px;top:277.8px;line-height:18px;height:18px;font:9.3px/18px 'DejaVu Sans', 'Liberation Sans', sans-serif;color:#222;letter-spacing:0.241px;">11:09</div>
<svg class="i" style="left:218.3px;top:277.2px" width="16.2" height="18.2" viewBox="0 0 16 18" ><rect x="0" y="0" width="16" height="18" fill="#3fa7bd"/><rect x="1.6" y="3.5" width="4.1" height="1.6" fill="#fff"/><rect x="7.5" y="3.5" width="7" height="1.6" fill="#fff"/><rect x="1.6" y="7.3" width="4.1" height="1.6" fill="#fff"/><rect x="7.5" y="7.3" width="7" height="1.6" fill="#fff"/><rect x="1.6" y="11" width="4.1" height="1.6" fill="#fff"/><rect x="7.5" y="11" width="7" height="1.6" fill="#fff"/><rect x="10.4" y="15.2" width="4.1" height="1.4" fill="#fff"/></svg>
<div class="t" style="left:359.2px;top:277.8px;line-height:18px;height:18px;font:9.3px/18px 'DejaVu Sans', 'Liberation Sans', sans-serif;color:#222;letter-spacing:0.408px;">DM_019186</div>
<div class="t" style="left:422.2px;top:277.8px;line-height:18px;height:18px;font:9.3px/18px 'DejaVu Sans', 'Liberation Sans', sans-serif;color:#222;letter-spacing:0.109px;">Moyenne</div>
<svg class="i" style="left:477.8px;top:280.0px" width="9.4" height="14.4" viewBox="0 0 9.4 14.4" ><path d="M5.4 0 H7.6 L5.8 5.7 L9.3 5.1 L2.6 14.4 L3.8 8.1 L0.1 8.8 Z" fill="#f3a530"/></svg>
<div class="t" style="left:494.6px;top:277.8px;line-height:18px;height:18px;font:9.3px/18px 'DejaVu Sans', 'Liberation Sans', sans-serif;color:#111;letter-spacing:0.131px;">Nouvelle demande</div>
<div class="t" style="left:600.2px;top:277.8px;line-height:18px;height:18px;font:9.3px/18px 'DejaVu Sans', 'Liberation Sans', sans-serif;color:#222;letter-spacing:0.592px;">03/02/21 11:09</div>
<div class="t" style="left:685.2px;top:277.8px;line-height:18px;height:18px;font:9.3px/18px 'DejaVu Sans', 'Liberation Sans', sans-serif;color:#222;letter-spacing:0.284px;">MON PANIER</div>
</div>
<div>
<div class="cb" style="left:55.3px;top:304.70px"></div>
<svg class="i" style="left:81.6px;top:305.4px" width="11.4" height="11.4" viewBox="0 0 11.4 11.4" ><circle cx="4.9" cy="4.9" r="4" fill="none" stroke="#4b4544" stroke-width="1.4"/><path d="M7.9 7.9 L10.7 10.6" stroke="#4b4544" stroke-width="1.7" stroke-linecap="round"/><path d="M3 4.9 H6.8 M4.9 3 V6.8" stroke="#4b4544" stroke-width="1.1"/></svg>
<svg class="i" style="left:103.8px;top:305.5px" width="11" height="10.6" viewBox="0 0 11 10.6" ><path d="M0.1 10.5 L0.9 8.1 L7.9 1.1 L9.5 2.7 L2.5 9.7 Z" fill="#4b4544"/><path d="M8.5 0.6 L9.1 0 a0.5 0.5 0 0 1 0.7 0 L10.6 0.9 a0.5 0.5 0 0 1 0 0.7 L10 2.2 Z" fill="#4b4544"/></svg>
<svg class="i" style="left:126.9px;top:309.9px" width="10" height="2.6" viewBox="0 0 10 2.6" ><circle cx="1.3" cy="1.3" r="1.25" fill="#4b4544"/><circle cx="5.0" cy="1.3" r="1.25" fill="#4b4544"/><circle cx="8.700000000000001" cy="1.3" r="1.25" fill="#4b4544"/></svg>
<div class="t" style="left:177.2px;top:302.6px;line-height:18px;height:18px;font:9.3px/18px 'DejaVu Sans', 'Liberation Sans', sans-serif;color:#222;letter-spacing:0.241px;">11:08</div>
<div class="t" style="left:359.2px;top:302.6px;line-height:18px;height:18px;font:9.3px/18px 'DejaVu Sans', 'Liberation Sans', sans-serif;color:#222;letter-spacing:0.408px;">DM_019184</div>
<div class="t" style="left:422.2px;top:302.6px;line-height:18px;height:18px;font:9.3px/18px 'DejaVu Sans', 'Liberation Sans', sans-serif;color:#222;letter-spacing:0.109px;">Moyenne</div>
<svg class="i" style="left:480px;top:307.2px" width="13.4" height="10.6" viewBox="0 0 13 10.6" ><path d="M1 5.6 L4.7 9.1 L12 1.2" fill="none" stroke="#4aae2a" stroke-width="3.1" stroke-linecap="butt" stroke-linejoin="miter"/></svg>
<div class="t" style="left:501px;top:303.3px;line-height:18px;height:18px;font:9.3px/18px 'DejaVu Sans', 'Liberation Sans', sans-serif;color:#555;letter-spacing:0.223px;">Clôturé</div>
<div class="t" style="left:600.2px;top:302.6px;line-height:18px;height:18px;font:9.3px/18px 'DejaVu Sans', 'Liberation Sans', sans-serif;color:#222;letter-spacing:0.592px;">03/02/21 11:08</div>
<div class="t" style="left:685.2px;top:302.6px;line-height:18px;height:18px;font:9.3px/18px 'DejaVu Sans', 'Liberation Sans', sans-serif;color:#222;letter-spacing:0.169px;">COMMANDE ANNULEE CAUSE LOGISTIQUE</div>
</div>
<div>
<div class="cb" style="left:55.3px;top:329.50px"></div>
<svg class="i" style="left:81.6px;top:330.2px" width="11.4" height="11.4" viewBox="0 0 11.4 11.4" ><circle cx="4.9" cy="4.9" r="4" fill="none" stroke="#4b4544" stroke-width="1.4"/><path d="M7.9 7.9 L10.7 10.6" stroke="#4b4544" stroke-width="1.7" stroke-linecap="round"/><path d="M3 4.9 H6.8 M4.9 3 V6.8" stroke="#4b4544" stroke-width="1.1"/></svg>
<svg class="i" style="left:103.8px;top:330.3px" width="11" height="10.6" viewBox="0 0 11 10.6" ><path d="M0.1 10.5 L0.9 8.1 L7.9 1.1 L9.5 2.7 L2.5 9.7 Z" fill="#4b4544"/><path d="M8.5 0.6 L9.1 0 a0.5 0.5 0 0 1 0.7 0 L10.6 0.9 a0.5 0.5 0 0 1 0 0.7 L10 2.2 Z" fill="#4b4544"/></svg>
<svg class="i" style="left:126.9px;top:334.7px" width="10" height="2.6" viewBox="0 0 10 2.6" ><circle cx="1.3" cy="1.3" r="1.25" fill="#4b4544"/><circle cx="5.0" cy="1.3" r="1.25" fill="#4b4544"/><circle cx="8.700000000000001" cy="1.3" r="1.25" fill="#4b4544"/></svg>
<div class="t" style="left:177.2px;top:327.4px;line-height:18px;height:18px;font:9.3px/18px 'DejaVu Sans', 'Liberation Sans', sans-serif;color:#222;letter-spacing:0.241px;">11:08</div>
<div class="t" style="left:359.2px;top:327.4px;line-height:18px;height:18px;font:9.3px/18px 'DejaVu Sans', 'Liberation Sans', sans-serif;color:#222;letter-spacing:0.408px;">DM_019184</div>
<div class="t" style="left:422.2px;top:327.4px;line-height:18px;height:18px;font:9.3px/18px 'DejaVu Sans', 'Liberation Sans', sans-serif;color:#222;letter-spacing:0.109px;">Moyenne</div>
<svg class="i" style="left:480px;top:332.0px" width="13.4" height="10.6" viewBox="0 0 13 10.6" ><path d="M1 5.6 L4.7 9.1 L12 1.2" fill="none" stroke="#4aae2a" stroke-width="3.1" stroke-linecap="butt" stroke-linejoin="miter"/></svg>
<div class="t" style="left:501px;top:328.1px;line-height:18px;height:18px;font:9.3px/18px 'DejaVu Sans', 'Liberation Sans', sans-serif;color:#555;letter-spacing:0.223px;">Clôturé</div>
<div class="t" style="left:600.2px;top:327.4px;line-height:18px;height:18px;font:9.3px/18px 'DejaVu Sans', 'Liberation Sans', sans-serif;color:#222;letter-spacing:0.592px;">03/02/21 11:08</div>
<div class="t" style="left:685.2px;top:327.4px;line-height:18px;height:18px;font:9.3px/18px 'DejaVu Sans', 'Liberation Sans', sans-serif;color:#222;letter-spacing:0.169px;">COMMANDE ANNULEE CAUSE LOGISTIQUE</div>
</div>
<div>
<div class="cb" style="left:55.3px;top:354.30px"></div>
<svg class="i" style="left:81.6px;top:355.0px" width="11.4" height="11.4" viewBox="0 0 11.4 11.4" ><circle cx="4.9" cy="4.9" r="4" fill="none" stroke="#4b4544" stroke-width="1.4"/><path d="M7.9 7.9 L10.7 10.6" stroke="#4b4544" stroke-width="1.7" stroke-linecap="round"/><path d="M3 4.9 H6.8 M4.9 3 V6.8" stroke="#4b4544" stroke-width="1.1"/></svg>
<svg class="i" style="left:103.8px;top:355.1px" width="11" height="10.6" viewBox="0 0 11 10.6" ><path d="M0.1 10.5 L0.9 8.1 L7.9 1.1 L9.5 2.7 L2.5 9.7 Z" fill="#4b4544"/><path d="M8.5 0.6 L9.1 0 a0.5 0.5 0 0 1 0.7 0 L10.6 0.9 a0.5 0.5 0 0 1 0 0.7 L10 2.2 Z" fill="#4b4544"/></svg>
<svg class="i" style="left:126.9px;top:359.5px" width="10" height="2.6" viewBox="0 0 10 2.6" ><circle cx="1.3" cy="1.3" r="1.25" fill="#4b4544"/><circle cx="5.0" cy="1.3" r="1.25" fill="#4b4544"/><circle cx="8.700000000000001" cy="1.3" r="1.25" fill="#4b4544"/></svg>
<div class="t" style="left:177.2px;top:352.2px;line-height:18px;height:18px;font:9.3px/18px 'DejaVu Sans', 'Liberation Sans', sans-serif;color:#222;letter-spacing:0.241px;">11:07</div>
<div class="t" style="left:359.2px;top:352.2px;line-height:18px;height:18px;font:9.3px/18px 'DejaVu Sans', 'Liberation Sans', sans-serif;color:#222;letter-spacing:0.408px;">DM_019183</div>
<div class="t" style="left:422.2px;top:352.2px;line-height:18px;height:18px;font:9.3px/18px 'DejaVu Sans', 'Liberation Sans', sans-serif;color:#222;letter-spacing:0.109px;">Moyenne</div>
<svg class="i" style="left:480px;top:356.8px" width="13.4" height="10.6" viewBox="0 0 13 10.6" ><path d="M1 5.6 L4.7 9.1 L12 1.2" fill="none" stroke="#4aae2a" stroke-width="3.1" stroke-linecap="butt" stroke-linejoin="miter"/></svg>
<div class="t" style="left:501px;top:352.9px;line-height:18px;height:18px;font:9.3px/18px 'DejaVu Sans', 'Liberation Sans', sans-serif;color:#555;letter-spacing:0.223px;">Clôturé</div>
<div class="t" style="left:600.2px;top:352.2px;line-height:18px;height:18px;font:9.3px/18px 'DejaVu Sans', 'Liberation Sans', sans-serif;color:#222;letter-spacing:0.592px;">03/02/21 11:07</div>
<div class="t" style="left:685.2px;top:352.2px;line-height:18px;height:18px;font:9.3px/18px 'DejaVu Sans', 'Liberation Sans', sans-serif;color:#222;letter-spacing:0.169px;">COMMANDE ANNULEE CAUSE LOGISTIQUE</div>
</div>
<div>
<div class="cb" style="left:55.3px;top:379.10px"></div>
<svg class="i" style="left:81.6px;top:379.8px" width="11.4" height="11.4" viewBox="0 0 11.4 11.4" ><circle cx="4.9" cy="4.9" r="4" fill="none" stroke="#4b4544" stroke-width="1.4"/><path d="M7.9 7.9 L10.7 10.6" stroke="#4b4544" stroke-width="1.7" stroke-linecap="round"/><path d="M3 4.9 H6.8 M4.9 3 V6.8" stroke="#4b4544" stroke-width="1.1"/></svg>
<svg class="i" style="left:103.8px;top:379.9px" width="11" height="10.6" viewBox="0 0 11 10.6" ><path d="M0.1 10.5 L0.9 8.1 L7.9 1.1 L9.5 2.7 L2.5 9.7 Z" fill="#4b4544"/><path d="M8.5 0.6 L9.1 0 a0.5 0.5 0 0 1 0.7 0 L10.6 0.9 a0.5 0.5 0 0 1 0 0.7 L10 2.2 Z" fill="#4b4544"/></svg>
<svg class="i" style="left:126.9px;top:384.3px" width="10" height="2.6" viewBox="0 0 10 2.6" ><circle cx="1.3" cy="1.3" r="1.25" fill="#4b4544"/><circle cx="5.0" cy="1.3" r="1.25" fill="#4b4544"/><circle cx="8.700000000000001" cy="1.3" r="1.25" fill="#4b4544"/></svg>
<div class="t" style="left:177.2px;top:377.0px;line-height:18px;height:18px;font:9.3px/18px 'DejaVu Sans', 'Liberation Sans', sans-serif;color:#222;letter-spacing:0.241px;">11:07</div>
<div class="t" style="left:359.2px;top:377.0px;line-height:18px;height:18px;font:9.3px/18px 'DejaVu Sans', 'Liberation Sans', sans-serif;color:#222;letter-spacing:0.408px;">DM_019183</div>
<div class="t" style="left:422.2px;top:377.0px;line-height:18px;height:18px;font:9.3px/18px 'DejaVu Sans', 'Liberation Sans', sans-serif;color:#222;letter-spacing:0.109px;">Moyenne</div>
<svg class="i" style="left:480px;top:381.6px" width="13.4" height="10.6" viewBox="0 0 13 10.6" ><path d="M1 5.6 L4.7 9.1 L12 1.2" fill="none" stroke="#4aae2a" stroke-width="3.1" stroke-linecap="butt" stroke-linejoin="miter"/></svg>
<div class="t" style="left:501px;top:377.7px;line-height:18px;height:18px;font:9.3px/18px 'DejaVu Sans', 'Liberation Sans', sans-serif;color:#555;letter-spacing:0.223px;">Clôturé</div>
<div class="t" style="left:600.2px;top:377.0px;line-height:18px;height:18px;font:9.3px/18px 'DejaVu Sans', 'Liberation Sans', sans-serif;color:#222;letter-spacing:0.592px;">03/02/21 11:07</div>
<div class="t" style="left:685.2px;top:377.0px;line-height:18px;height:18px;font:9.3px/18px 'DejaVu Sans', 'Liberation Sans', sans-serif;color:#222;letter-spacing:0.169px;">COMMANDE ANNULEE CAUSE LOGISTIQUE</div>
</div>
<div>
<div class="cb" style="left:55.3px;top:403.90px"></div>
<svg class="i" style="left:81.6px;top:404.6px" width="11.4" height="11.4" viewBox="0 0 11.4 11.4" ><circle cx="4.9" cy="4.9" r="4" fill="none" stroke="#4b4544" stroke-width="1.4"/><path d="M7.9 7.9 L10.7 10.6" stroke="#4b4544" stroke-width="1.7" stroke-linecap="round"/><path d="M3 4.9 H6.8 M4.9 3 V6.8" stroke="#4b4544" stroke-width="1.1"/></svg>
<svg class="i" style="left:103.8px;top:404.7px" width="11" height="10.6" viewBox="0 0 11 10.6" ><path d="M0.1 10.5 L0.9 8.1 L7.9 1.1 L9.5 2.7 L2.5 9.7 Z" fill="#4b4544"/><path d="M8.5 0.6 L9.1 0 a0.5 0.5 0 0 1 0.7 0 L10.6 0.9 a0.5 0.5 0 0 1 0 0.7 L10 2.2 Z" fill="#4b4544"/></svg>
<svg class="i" style="left:126.9px;top:409.1px" width="10" height="2.6" viewBox="0 0 10 2.6" ><circle cx="1.3" cy="1.3" r="1.25" fill="#4b4544"/><circle cx="5.0" cy="1.3" r="1.25" fill="#4b4544"/><circle cx="8.700000000000001" cy="1.3" r="1.25" fill="#4b4544"/></svg>
<div class="t" style="left:177.2px;top:401.8px;line-height:18px;height:18px;font:9.3px/18px 'DejaVu Sans', 'Liberation Sans', sans-serif;color:#222;letter-spacing:0.241px;">11:05</div>
<div class="t" style="left:359.2px;top:401.8px;line-height:18px;height:18px;font:9.3px/18px 'DejaVu Sans', 'Liberation Sans', sans-serif;color:#222;letter-spacing:0.408px;">DM_019182</div>
<div class="t" style="left:422.2px;top:401.8px;line-height:18px;height:18px;font:9.3px/18px 'DejaVu Sans', 'Liberation Sans', sans-serif;color:#222;letter-spacing:0.109px;">Moyenne</div>
<svg class="i" style="left:480px;top:406.4px" width="13.4" height="10.6" viewBox="0 0 13 10.6" ><path d="M1 5.6 L4.7 9.1 L12 1.2" fill="none" stroke="#4aae2a" stroke-width="3.1" stroke-linecap="butt" stroke-linejoin="miter"/></svg>
<div class="t" style="left:501px;top:402.5px;line-height:18px;height:18px;font:9.3px/18px 'DejaVu Sans', 'Liberation Sans', sans-serif;color:#555;letter-spacing:0.223px;">Clôturé</div>
<div class="t" style="left:600.2px;top:401.8px;line-height:18px;height:18px;font:9.3px/18px 'DejaVu Sans', 'Liberation Sans', sans-serif;color:#222;letter-spacing:0.592px;">03/02/21 11:05</div>
<div class="t" style="left:685.2px;top:401.8px;line-height:18px;height:18px;font:9.3px/18px 'DejaVu Sans', 'Liberation Sans', sans-serif;color:#222;letter-spacing:0.169px;">COMMANDE ANNULEE CAUSE LOGISTIQUE</div>
</div>
<div>
<div class="cb" style="left:55.3px;top:428.70px"></div>
<svg class="i" style="left:81.6px;top:429.4px" width="11.4" height="11.4" viewBox="0 0 11.4 11.4" ><circle cx="4.9" cy="4.9" r="4" fill="none" stroke="#4b4544" stroke-width="1.4"/><path d="M7.9 7.9 L10.7 10.6" stroke="#4b4544" stroke-width="1.7" stroke-linecap="round"/><path d="M3 4.9 H6.8 M4.9 3 V6.8" stroke="#4b4544" stroke-width="1.1"/></svg>
<svg class="i" style="left:103.8px;top:429.5px" width="11" height="10.6" viewBox="0 0 11 10.6" ><path d="M0.1 10.5 L0.9 8.1 L7.9 1.1 L9.5 2.7 L2.5 9.7 Z" fill="#4b4544"/><path d="M8.5 0.6 L9.1 0 a0.5 0.5 0 0 1 0.7 0 L10.6 0.9 a0.5 0.5 0 0 1 0 0.7 L10 2.2 Z" fill="#4b4544"/></svg>
<svg class="i" style="left:126.9px;top:433.9px" width="10" height="2.6" viewBox="0 0 10 2.6" ><circle cx="1.3" cy="1.3" r="1.25" fill="#4b4544"/><circle cx="5.0" cy="1.3" r="1.25" fill="#4b4544"/><circle cx="8.700000000000001" cy="1.3" r="1.25" fill="#4b4544"/></svg>
<div class="t" style="left:177.2px;top:426.6px;line-height:18px;height:18px;font:9.3px/18px 'DejaVu Sans', 'Liberation Sans', sans-serif;color:#222;letter-spacing:0.241px;">11:05</div>
<div class="t" style="left:359.2px;top:426.6px;line-height:18px;height:18px;font:9.3px/18px 'DejaVu Sans', 'Liberation Sans', sans-serif;color:#222;letter-spacing:0.408px;">DM_019182</div>
<div class="t" style="left:422.2px;top:426.6px;line-height:18px;height:18px;font:9.3px/18px 'DejaVu Sans', 'Liberation Sans', sans-serif;color:#222;letter-spacing:0.109px;">Moyenne</div>
<svg class="i" style="left:480px;top:431.2px" width="13.4" height="10.6" viewBox="0 0 13 10.6" ><path d="M1 5.6 L4.7 9.1 L12 1.2" fill="none" stroke="#4aae2a" stroke-width="3.1" stroke-linecap="butt" stroke-linejoin="miter"/></svg>
<div class="t" style="left:501px;top:427.3px;line-height:18px;height:18px;font:9.3px/18px 'DejaVu Sans', 'Liberation Sans', sans-serif;color:#555;letter-spacing:0.223px;">Clôturé</div>
<div class="t" style="left:600.2px;top:426.6px;line-height:18px;height:18px;font:9.3px/18px 'DejaVu Sans', 'Liberation Sans', sans-serif;color:#222;letter-spacing:0.592px;">03/02/21 11:05</div>
<div class="t" style="left:685.2px;top:426.6px;line-height:18px;height:18px;font:9.3px/18px 'DejaVu Sans', 'Liberation Sans', sans-serif;color:#222;letter-spacing:0.169px;">COMMANDE ANNULEE CAUSE LOGISTIQUE</div>
</div>
<div>
<div class="cb" style="left:55.3px;top:453.50px"></div>
<svg class="i" style="left:81.6px;top:454.2px" width="11.4" height="11.4" viewBox="0 0 11.4 11.4" ><circle cx="4.9" cy="4.9" r="4" fill="none" stroke="#4b4544" stroke-width="1.4"/><path d="M7.9 7.9 L10.7 10.6" stroke="#4b4544" stroke-width="1.7" stroke-linecap="round"/><path d="M3 4.9 H6.8 M4.9 3 V6.8" stroke="#4b4544" stroke-width="1.1"/></svg>
<svg class="i" style="left:103.8px;top:454.3px" width="11" height="10.6" viewBox="0 0 11 10.6" ><path d="M0.1 10.5 L0.9 8.1 L7.9 1.1 L9.5 2.7 L2.5 9.7 Z" fill="#4b4544"/><path d="M8.5 0.6 L9.1 0 a0.5 0.5 0 0 1 0.7 0 L10.6 0.9 a0.5 0.5 0 0 1 0 0.7 L10 2.2 Z" fill="#4b4544"/></svg>
<svg class="i" style="left:126.9px;top:458.7px" width="10" height="2.6" viewBox="0 0 10 2.6" ><circle cx="1.3" cy="1.3" r="1.25" fill="#4b4544"/><circle cx="5.0" cy="1.3" r="1.25" fill="#4b4544"/><circle cx="8.700000000000001" cy="1.3" r="1.25" fill="#4b4544"/></svg>
<div class="t" style="left:177.2px;top:451.4px;line-height:18px;height:18px;font:9.3px/18px 'DejaVu Sans', 'Liberation Sans', sans-serif;color:#222;letter-spacing:0.241px;">11:02</div>
<svg class="i" style="left:218.3px;top:450.8px" width="16.2" height="18.2" viewBox="0 0 16 18" ><rect x="0" y="0" width="16" height="18" fill="#3fa7bd"/><rect x="1.6" y="3.5" width="4.1" height="1.6" fill="#fff"/><rect x="7.5" y="3.5" width="7" height="1.6" fill="#fff"/><rect x="1.6" y="7.3" width="4.1" height="1.6" fill="#fff"/><rect x="7.5" y="7.3" width="7" height="1.6" fill="#fff"/><rect x="1.6" y="11" width="4.1" height="1.6" fill="#fff"/><rect x="7.5" y="11" width="7" height="1.6" fill="#fff"/><rect x="10.4" y="15.2" width="4.1" height="1.4" fill="#fff"/></svg>
<div class="t" style="left:359.2px;top:451.4px;line-height:18px;height:18px;font:9.3px/18px 'DejaVu Sans', 'Liberation Sans', sans-serif;color:#222;letter-spacing:0.408px;">DM_019180</div>
<div class="t" style="left:422.2px;top:451.4px;line-height:18px;height:18px;font:9.3px/18px 'DejaVu Sans', 'Liberation Sans', sans-serif;color:#222;letter-spacing:0.109px;">Moyenne</div>
<svg class="i" style="left:477.8px;top:453.6px" width="9.4" height="14.4" viewBox="0 0 9.4 14.4" ><path d="M5.4 0 H7.6 L5.8 5.7 L9.3 5.1 L2.6 14.4 L3.8 8.1 L0.1 8.8 Z" fill="#f3a530"/></svg>
<div class="t" style="left:494.6px;top:451.4px;line-height:18px;height:18px;font:9.3px/18px 'DejaVu Sans', 'Liberation Sans', sans-serif;color:#111;letter-spacing:0.131px;">Nouvelle demande</div>
<div class="t" style="left:600.2px;top:451.4px;line-height:18px;height:18px;font:9.3px/18px 'DejaVu Sans', 'Liberation Sans', sans-serif;color:#222;letter-spacing:0.592px;">03/02/21 11:02</div>
<div class="t" style="left:685.2px;top:451.4px;line-height:18px;height:18px;font:9.3px/18px 'DejaVu Sans', 'Liberation Sans', sans-serif;color:#222;letter-spacing:0.284px;">MON PANIER</div>
</div>
<div>
<div class="cb" style="left:55.3px;top:478.30px"></div>
<svg class="i" style="left:81.6px;top:479.0px" width="11.4" height="11.4" viewBox="0 0 11.4 11.4" ><circle cx="4.9" cy="4.9" r="4" fill="none" stroke="#4b4544" stroke-width="1.4"/><path d="M7.9 7.9 L10.7 10.6" stroke="#4b4544" stroke-width="1.7" stroke-linecap="round"/><path d="M3 4.9 H6.8 M4.9 3 V6.8" stroke="#4b4544" stroke-width="1.1"/></svg>
<svg class="i" style="left:103.8px;top:479.1px" width="11" height="10.6" viewBox="0 0 11 10.6" ><path d="M0.1 10.5 L0.9 8.1 L7.9 1.1 L9.5 2.7 L2.5 9.7 Z" fill="#4b4544"/><path d="M8.5 0.6 L9.1 0 a0.5 0.5 0 0 1 0.7 0 L10.6 0.9 a0.5 0.5 0 0 1 0 0.7 L10 2.2 Z" fill="#4b4544"/></svg>
<svg class="i" style="left:126.9px;top:483.5px" width="10" height="2.6" viewBox="0 0 10 2.6" ><circle cx="1.3" cy="1.3" r="1.25" fill="#4b4544"/><circle cx="5.0" cy="1.3" r="1.25" fill="#4b4544"/><circle cx="8.700000000000001" cy="1.3" r="1.25" fill="#4b4544"/></svg>
<div class="t" style="left:177.2px;top:476.2px;line-height:18px;height:18px;font:9.3px/18px 'DejaVu Sans', 'Liberation Sans', sans-serif;color:#222;letter-spacing:0.241px;">11:03</div>
<div class="t" style="left:215.4px;top:470.6px;line-height:24px;height:24px;font:20.8px/24px 'Liberation Sans', sans-serif;color:#3fa7bd;-webkit-text-stroke:0.75px #3fa7bd;">@</div>
<div class="t" style="left:359.2px;top:476.2px;line-height:18px;height:18px;font:9.3px/18px 'DejaVu Sans', 'Liberation Sans', sans-serif;color:#222;letter-spacing:0.408px;">DM_019181</div>
<div class="t" style="left:422.2px;top:476.2px;line-height:18px;height:18px;font:9.3px/18px 'DejaVu Sans', 'Liberation Sans', sans-serif;color:#222;letter-spacing:0.109px;">Moyenne</div>
<svg class="i" style="left:477.8px;top:478.4px" width="9.4" height="14.4" viewBox="0 0 9.4 14.4" ><path d="M5.4 0 H7.6 L5.8 5.7 L9.3 5.1 L2.6 14.4 L3.8 8.1 L0.1 8.8 Z" fill="#f3a530"/></svg>
<div class="t" style="left:494.6px;top:476.2px;line-height:18px;height:18px;font:9.3px/18px 'DejaVu Sans', 'Liberation Sans', sans-serif;color:#111;letter-spacing:0.131px;">Nouvelle demande</div>
<div class="t" style="left:600.2px;top:476.2px;line-height:18px;height:18px;font:9.3px/18px 'DejaVu Sans', 'Liberation Sans', sans-serif;color:#222;letter-spacing:0.592px;">03/02/21 11:01</div>
<div class="t" style="left:685.2px;top:476.2px;line-height:18px;height:18px;font:9.3px/18px 'DejaVu Sans', 'Liberation Sans', sans-serif;color:#222;letter-spacing:0.098px;">nouveau message</div>
</div>
<div>
<div class="cb" style="left:55.3px;top:503.10px"></div>
<svg class="i" style="left:81.6px;top:503.8px" width="11.4" height="11.4" viewBox="0 0 11.4 11.4" ><circle cx="4.9" cy="4.9" r="4" fill="none" stroke="#4b4544" stroke-width="1.4"/><path d="M7.9 7.9 L10.7 10.6" stroke="#4b4544" stroke-width="1.7" stroke-linecap="round"/><path d="M3 4.9 H6.8 M4.9 3 V6.8" stroke="#4b4544" stroke-width="1.1"/></svg>
<svg class="i" style="left:103.8px;top:503.9px" width="11" height="10.6" viewBox="0 0 11 10.6" ><path d="M0.1 10.5 L0.9 8.1 L7.9 1.1 L9.5 2.7 L2.5 9.7 Z" fill="#4b4544"/><path d="M8.5 0.6 L9.1 0 a0.5 0.5 0 0 1 0.7 0 L10.6 0.9 a0.5 0.5 0 0 1 0 0.7 L10 2.2 Z" fill="#4b4544"/></svg>
<svg class="i" style="left:126.9px;top:508.3px" width="10" height="2.6" viewBox="0 0 10 2.6" ><circle cx="1.3" cy="1.3" r="1.25" fill="#4b4544"/><circle cx="5.0" cy="1.3" r="1.25" fill="#4b4544"/><circle cx="8.700000000000001" cy="1.3" r="1.25" fill="#4b4544"/></svg>
<div class="t" style="left:177.2px;top:501.0px;line-height:18px;height:18px;font:9.3px/18px 'DejaVu Sans', 'Liberation Sans', sans-serif;color:#222;letter-spacing:0.241px;">11:01</div>
<div class="t" style="left:359.2px;top:501.0px;line-height:18px;height:18px;font:9.3px/18px 'DejaVu Sans', 'Liberation Sans', sans-serif;color:#222;letter-spacing:0.408px;">DM_019179</div>
<div class="t" style="left:422.2px;top:501.0px;line-height:18px;height:18px;font:9.3px/18px 'DejaVu Sans', 'Liberation Sans', sans-serif;color:#222;letter-spacing:0.109px;">Moyenne</div>
<svg class="i" style="left:480px;top:505.6px" width="13.4" height="10.6" viewBox="0 0 13 10.6" ><path d="M1 5.6 L4.7 9.1 L12 1.2" fill="none" stroke="#4aae2a" stroke-width="3.1" stroke-linecap="butt" stroke-linejoin="miter"/></svg>
<div class="t" style="left:501px;top:501.7px;line-height:18px;height:18px;font:9.3px/18px 'DejaVu Sans', 'Liberation Sans', sans-serif;color:#555;letter-spacing:0.223px;">Clôturé</div>
<div class="t" style="left:600.2px;top:501.0px;line-height:18px;height:18px;font:9.3px/18px 'DejaVu Sans', 'Liberation Sans', sans-serif;color:#222;letter-spacing:0.592px;">03/02/21 11:01</div>
<div class="t" style="left:685.2px;top:501.0px;line-height:18px;height:18px;font:9.3px/18px 'DejaVu Sans', 'Liberation Sans', sans-serif;color:#222;letter-spacing:0.169px;">COMMANDE ANNULEE CAUSE LOGISTIQUE</div>
</div>
<div>
<div class="cb" style="left:55.3px;top:527.90px"></div>
<svg class="i" style="left:81.6px;top:528.6px" width="11.4" height="11.4" viewBox="0 0 11.4 11.4" ><circle cx="4.9" cy="4.9" r="4" fill="none" stroke="#4b4544" stroke-width="1.4"/><path d="M7.9 7.9 L10.7 10.6" stroke="#4b4544" stroke-width="1.7" stroke-linecap="round"/><path d="M3 4.9 H6.8 M4.9 3 V6.8" stroke="#4b4544" stroke-width="1.1"/></svg>
<svg class="i" style="left:103.8px;top:528.7px" width="11" height="10.6" viewBox="0 0 11 10.6" ><path d="M0.1 10.5 L0.9 8.1 L7.9 1.1 L9.5 2.7 L2.5 9.7 Z" fill="#4b4544"/><path d="M8.5 0.6 L9.1 0 a0.5 0.5 0 0 1 0.7 0 L10.6 0.9 a0.5 0.5 0 0 1 0 0.7 L10 2.2 Z" fill="#4b4544"/></svg>
<svg class="i" style="left:126.9px;top:533.1px" width="10" height="2.6" viewBox="0 0 10 2.6" ><circle cx="1.3" cy="1.3" r="1.25" fill="#4b4544"/><circle cx="5.0" cy="1.3" r="1.25" fill="#4b4544"/><circle cx="8.700000000000001" cy="1.3" r="1.25" fill="#4b4544"/></svg>
<div class="t" style="left:177.2px;top:525.8px;line-height:18px;height:18px;font:9.3px/18px 'DejaVu Sans', 'Liberation Sans', sans-serif;color:#222;letter-spacing:0.241px;">11:01</div>
<div class="t" style="left:359.2px;top:525.8px;line-height:18px;height:18px;font:9.3px/18px 'DejaVu Sans', 'Liberation Sans', sans-serif;color:#222;letter-spacing:0.408px;">DM_019179</div>
<div class="t" style="left:422.2px;top:525.8px;line-height:18px;height:18px;font:9.3px/18px 'DejaVu Sans', 'Liberation Sans', sans-serif;color:#222;letter-spacing:0.109px;">Moyenne</div>
<svg class="i" style="left:480px;top:530.4px" width="13.4" height="10.6" viewBox="0 0 13 10.6" ><path d="M1 5.6 L4.7 9.1 L12 1.2" fill="none" stroke="#4aae2a" stroke-width="3.1" stroke-linecap="butt" stroke-linejoin="miter"/></svg>
<div class="t" style="left:501px;top:526.5px;line-height:18px;height:18px;font:9.3px/18px 'DejaVu Sans', 'Liberation Sans', sans-serif;color:#555;letter-spacing:0.223px;">Clôturé</div>
<div class="t" style="left:600.2px;top:525.8px;line-height:18px;height:18px;font:9.3px/18px 'DejaVu Sans', 'Liberation Sans', sans-serif;color:#222;letter-spacing:0.592px;">03/02/21 11:01</div>
<div class="t" style="left:685.2px;top:525.8px;line-height:18px;height:18px;font:9.3px/18px 'DejaVu Sans', 'Liberation Sans', sans-serif;color:#222;letter-spacing:0.169px;">COMMANDE ANNULEE CAUSE LOGISTIQUE</div>
</div>
<div>
<div class="cb" style="left:55.3px;top:552.70px"></div>
<svg class="i" style="left:81.6px;top:553.4px" width="11.4" height="11.4" viewBox="0 0 11.4 11.4" ><circle cx="4.9" cy="4.9" r="4" fill="none" stroke="#4b4544" stroke-width="1.4"/><path d="M7.9 7.9 L10.7 10.6" stroke="#4b4544" stroke-width="1.7" stroke-linecap="round"/><path d="M3 4.9 H6.8 M4.9 3 V6.8" stroke="#4b4544" stroke-width="1.1"/></svg>
<svg class="i" style="left:103.8px;top:553.5px" width="11" height="10.6" viewBox="0 0 11 10.6" ><path d="M0.1 10.5 L0.9 8.1 L7.9 1.1 L9.5 2.7 L2.5 9.7 Z" fill="#4b4544"/><path d="M8.5 0.6 L9.1 0 a0.5 0.5 0 0 1 0.7 0 L10.6 0.9 a0.5 0.5 0 0 1 0 0.7 L10 2.2 Z" fill="#4b4544"/></svg>
<svg class="i" style="left:126.9px;top:557.9px" width="10" height="2.6" viewBox="0 0 10 2.6" ><circle cx="1.3" cy="1.3" r="1.25" fill="#4b4544"/><circle cx="5.0" cy="1.3" r="1.25" fill="#4b4544"/><circle cx="8.700000000000001" cy="1.3" r="1.25" fill="#4b4544"/></svg>
<div class="t" style="left:177.2px;top:550.6px;line-height:18px;height:18px;font:9.3px/18px 'DejaVu Sans', 'Liberation Sans', sans-serif;color:#222;letter-spacing:0.241px;">11:01</div>
<div class="t" style="left:215.4px;top:545.0px;line-height:24px;height:24px;font:20.8px/24px 'Liberation Sans', sans-serif;color:#3fa7bd;-webkit-text-stroke:0.75px #3fa7bd;">@</div>
<div class="t" style="left:359.2px;top:550.6px;line-height:18px;height:18px;font:9.3px/18px 'DejaVu Sans', 'Liberation Sans', sans-serif;color:#222;letter-spacing:0.408px;">DM_019178</div>
<div class="t" style="left:422.2px;top:550.6px;line-height:18px;height:18px;font:9.3px/18px 'DejaVu Sans', 'Liberation Sans', sans-serif;color:#222;letter-spacing:0.109px;">Moyenne</div>
<svg class="i" style="left:477.8px;top:552.8px" width="9.4" height="14.4" viewBox="0 0 9.4 14.4" ><path d="M5.4 0 H7.6 L5.8 5.7 L9.3 5.1 L2.6 14.4 L3.8 8.1 L0.1 8.8 Z" fill="#f3a530"/></svg>
<div class="t" style="left:494.6px;top:550.6px;line-height:18px;height:18px;font:9.3px/18px 'DejaVu Sans', 'Liberation Sans', sans-serif;color:#111;letter-spacing:0.131px;">Nouvelle demande</div>
<div class="t" style="left:600.2px;top:550.6px;line-height:18px;height:18px;font:9.3px/18px 'DejaVu Sans', 'Liberation Sans', sans-serif;color:#222;letter-spacing:0.592px;">03/02/21 11:00</div>
<div class="t" style="left:685.2px;top:550.6px;line-height:18px;height:18px;font:9.3px/18px 'DejaVu Sans', 'Liberation Sans', sans-serif;color:#222;letter-spacing:0.098px;">nouveau message</div>
</div>
<div>
<div class="cb" style="left:55.3px;top:577.50px"></div>
<svg class="i" style="left:81.6px;top:578.2px" width="11.4" height="11.4" viewBox="0 0 11.4 11.4" ><circle cx="4.9" cy="4.9" r="4" fill="none" stroke="#4b4544" stroke-width="1.4"/><path d="M7.9 7.9 L10.7 10.6" stroke="#4b4544" stroke-width="1.7" stroke-linecap="round"/><path d="M3 4.9 H6.8 M4.9 3 V6.8" stroke="#4b4544" stroke-width="1.1"/></svg>
<svg class="i" style="left:103.8px;top:578.3px" width="11" height="10.6" viewBox="0 0 11 10.6" ><path d="M0.1 10.5 L0.9 8.1 L7.9 1.1 L9.5 2.7 L2.5 9.7 Z" fill="#4b4544"/><path d="M8.5 0.6 L9.1 0 a0.5 0.5 0 0 1 0.7 0 L10.6 0.9 a0.5 0.5 0 0 1 0 0.7 L10 2.2 Z" fill="#4b4544"/></svg>
<svg class="i" style="left:126.9px;top:582.7px" width="10" height="2.6" viewBox="0 0 10 2.6" ><circle cx="1.3" cy="1.3" r="1.25" fill="#4b4544"/><circle cx="5.0" cy="1.3" r="1.25" fill="#4b4544"/><circle cx="8.700000000000001" cy="1.3" r="1.25" fill="#4b4544"/></svg>
<div class="t" style="left:177.2px;top:575.4px;line-height:18px;height:18px;font:9.3px/18px 'DejaVu Sans', 'Liberation Sans', sans-serif;color:#222;letter-spacing:0.241px;">11:00</div>
<div class="t" style="left:359.2px;top:575.4px;line-height:18px;height:18px;font:9.3px/18px 'DejaVu Sans', 'Liberation Sans', sans-serif;color:#222;letter-spacing:0.408px;">DM_019177</div>
<div class="t" style="left:422.2px;top:575.4px;line-height:18px;height:18px;font:9.3px/18px 'DejaVu Sans', 'Liberation Sans', sans-serif;color:#222;letter-spacing:0.109px;">Moyenne</div>
<svg class="i" style="left:480px;top:580.0px" width="13.4" height="10.6" viewBox="0 0 13 10.6" ><path d="M1 5.6 L4.7 9.1 L12 1.2" fill="none" stroke="#4aae2a" stroke-width="3.1" stroke-linecap="butt" stroke-linejoin="miter"/></svg>
<div class="t" style="left:501px;top:576.1px;line-height:18px;height:18px;font:9.3px/18px 'DejaVu Sans', 'Liberation Sans', sans-serif;color:#555;letter-spacing:0.223px;">Clôturé</div>
<div class="t" style="left:600.2px;top:575.4px;line-height:18px;height:18px;font:9.3px/18px 'DejaVu Sans', 'Liberation Sans', sans-serif;color:#222;letter-spacing:0.592px;">03/02/21 11:00</div>
<div class="t" style="left:685.2px;top:575.4px;line-height:18px;height:18px;font:9.3px/18px 'DejaVu Sans', 'Liberation Sans', sans-serif;color:#222;letter-spacing:0.169px;">COMMANDE ANNULEE CAUSE LOGISTIQUE</div>
</div>
<div>
<div class="cb" style="left:55.3px;top:602.30px"></div>
<svg class="i" style="left:81.6px;top:603.0px" width="11.4" height="11.4" viewBox="0 0 11.4 11.4" ><circle cx="4.9" cy="4.9" r="4" fill="none" stroke="#4b4544" stroke-width="1.4"/><path d="M7.9 7.9 L10.7 10.6" stroke="#4b4544" stroke-width="1.7" stroke-linecap="round"/><path d="M3 4.9 H6.8 M4.9 3 V6.8" stroke="#4b4544" stroke-width="1.1"/></svg>
<svg class="i" style="left:103.8px;top:603.1px" width="11" height="10.6" viewBox="0 0 11 10.6" ><path d="M0.1 10.5 L0.9 8.1 L7.9 1.1 L9.5 2.7 L2.5 9.7 Z" fill="#4b4544"/><path d="M8.5 0.6 L9.1 0 a0.5 0.5 0 0 1 0.7 0 L10.6 0.9 a0.5 0.5 0 0 1 0 0.7 L10 2.2 Z" fill="#4b4544"/></svg>
<svg class="i" style="left:126.9px;top:607.5px" width="10" height="2.6" viewBox="0 0 10 2.6" ><circle cx="1.3" cy="1.3" r="1.25" fill="#4b4544"/><circle cx="5.0" cy="1.3" r="1.25" fill="#4b4544"/><circle cx="8.700000000000001" cy="1.3" r="1.25" fill="#4b4544"/></svg>
<div class="t" style="left:177.2px;top:600.2px;line-height:18px;height:18px;font:9.3px/18px 'DejaVu Sans', 'Liberation Sans', sans-serif;color:#222;letter-spacing:0.241px;">11:00</div>
<div class="t" style="left:359.2px;top:600.2px;line-height:18px;height:18px;font:9.3px/18px 'DejaVu Sans', 'Liberation Sans', sans-serif;color:#222;letter-spacing:0.408px;">DM_019177</div>
<div class="t" style="left:422.2px;top:600.2px;line-height:18px;height:18px;font:9.3px/18px 'DejaVu Sans', 'Liberation Sans', sans-serif;color:#222;letter-spacing:0.109px;">Moyenne</div>
<svg class="i" style="left:480px;top:604.8px" width="13.4" height="10.6" viewBox="0 0 13 10.6" ><path d="M1 5.6 L4.7 9.1 L12 1.2" fill="none" stroke="#4aae2a" stroke-width="3.1" stroke-linecap="butt" stroke-linejoin="miter"/></svg>
<div class="t" style="left:501px;top:600.9px;line-height:18px;height:18px;font:9.3px/18px 'DejaVu Sans', 'Liberation Sans', sans-serif;color:#555;letter-spacing:0.223px;">Clôturé</div>
<div class="t" style="left:600.2px;top:600.2px;line-height:18px;height:18px;font:9.3px/18px 'DejaVu Sans', 'Liberation Sans', sans-serif;color:#222;letter-spacing:0.592px;">03/02/21 11:00</div>
<div class="t" style="left:685.2px;top:600.2px;line-height:18px;height:18px;font:9.3px/18px 'DejaVu Sans', 'Liberation Sans', sans-serif;color:#222;letter-spacing:0.169px;">COMMANDE ANNULEE CAUSE LOGISTIQUE</div>
</div>
<div>
<div class="cb" style="left:55.3px;top:627.10px"></div>
<svg class="i" style="left:81.6px;top:627.8px" width="11.4" height="11.4" viewBox="0 0 11.4 11.4" ><circle cx="4.9" cy="4.9" r="4" fill="none" stroke="#4b4544" stroke-width="1.4"/><path d="M7.9 7.9 L10.7 10.6" stroke="#4b4544" stroke-width="1.7" stroke-linecap="round"/><path d="M3 4.9 H6.8 M4.9 3 V6.8" stroke="#4b4544" stroke-width="1.1"/></svg>
<svg class="i" style="left:103.8px;top:627.9px" width="11" height="10.6" viewBox="0 0 11 10.6" ><path d="M0.1 10.5 L0.9 8.1 L7.9 1.1 L9.5 2.7 L2.5 9.7 Z" fill="#4b4544"/><path d="M8.5 0.6 L9.1 0 a0.5 0.5 0 0 1 0.7 0 L10.6 0.9 a0.5 0.5 0 0 1 0 0.7 L10 2.2 Z" fill="#4b4544"/></svg>
<svg class="i" style="left:126.9px;top:632.3px" width="10" height="2.6" viewBox="0 0 10 2.6" ><circle cx="1.3" cy="1.3" r="1.25" fill="#4b4544"/><circle cx="5.0" cy="1.3" r="1.25" fill="#4b4544"/><circle cx="8.700000000000001" cy="1.3" r="1.25" fill="#4b4544"/></svg>
<div class="t" style="left:177.2px;top:625.0px;line-height:18px;height:18px;font:9.3px/18px 'DejaVu Sans', 'Liberation Sans', sans-serif;color:#222;letter-spacing:0.241px;">11:00</div>
<svg class="i" style="left:218.3px;top:624.4px" width="16.2" height="18.2" viewBox="0 0 16 18" ><rect x="0" y="0" width="16" height="18" fill="#3fa7bd"/><rect x="1.6" y="3.5" width="4.1" height="1.6" fill="#fff"/><rect x="7.5" y="3.5" width="7" height="1.6" fill="#fff"/><rect x="1.6" y="7.3" width="4.1" height="1.6" fill="#fff"/><rect x="7.5" y="7.3" width="7" height="1.6" fill="#fff"/><rect x="1.6" y="11" width="4.1" height="1.6" fill="#fff"/><rect x="7.5" y="11" width="7" height="1.6" fill="#fff"/><rect x="10.4" y="15.2" width="4.1" height="1.4" fill="#fff"/></svg>
<div class="t" style="left:359.2px;top:625.0px;line-height:18px;height:18px;font:9.3px/18px 'DejaVu Sans', 'Liberation Sans', sans-serif;color:#222;letter-spacing:0.408px;">DM_019176</div>
<div class="t" style="left:422.2px;top:625.0px;line-height:18px;height:18px;font:9.3px/18px 'DejaVu Sans', 'Liberation Sans', sans-serif;color:#222;letter-spacing:0.109px;">Moyenne</div>
<svg class="i" style="left:477.8px;top:627.2px" width="9.4" height="14.4" viewBox="0 0 9.4 14.4" ><path d="M5.4 0 H7.6 L5.8 5.7 L9.3 5.1 L2.6 14.4 L3.8 8.1 L0.1 8.8 Z" fill="#f3a530"/></svg>
<div class="t" style="left:494.6px;top:625.0px;line-height:18px;height:18px;font:9.3px/18px 'DejaVu Sans', 'Liberation Sans', sans-serif;color:#111;letter-spacing:0.131px;">Nouvelle demande</div>
<div class="t" style="left:600.2px;top:625.0px;line-height:18px;height:18px;font:9.3px/18px 'DejaVu Sans', 'Liberation Sans', sans-serif;color:#222;letter-spacing:0.592px;">03/02/21 11:00</div>
<div class="t" style="left:685.2px;top:625.0px;line-height:18px;height:18px;font:9.3px/18px 'DejaVu Sans', 'Liberation Sans', sans-serif;color:#222;letter-spacing:0.293px;">MA LIVRAISON</div>
</div>
<div>
<div class="cb" style="left:55.3px;top:651.90px"></div>
<svg class="i" style="left:81.6px;top:652.6px" width="11.4" height="11.4" viewBox="0 0 11.4 11.4" ><circle cx="4.9" cy="4.9" r="4" fill="none" stroke="#4b4544" stroke-width="1.4"/><path d="M7.9 7.9 L10.7 10.6" stroke="#4b4544" stroke-width="1.7" stroke-linecap="round"/><path d="M3 4.9 H6.8 M4.9 3 V6.8" stroke="#4b4544" stroke-width="1.1"/></svg>
<svg class="i" style="left:103.8px;top:652.7px" width="11" height="10.6" viewBox="0 0 11 10.6" ><path d="M0.1 10.5 L0.9 8.1 L7.9 1.1 L9.5 2.7 L2.5 9.7 Z" fill="#4b4544"/><path d="M8.5 0.6 L9.1 0 a0.5 0.5 0 0 1 0.7 0 L10.6 0.9 a0.5 0.5 0 0 1 0 0.7 L10 2.2 Z" fill="#4b4544"/></svg>
<svg class="i" style="left:126.9px;top:657.1px" width="10" height="2.6" viewBox="0 0 10 2.6" ><circle cx="1.3" cy="1.3" r="1.25" fill="#4b4544"/><circle cx="5.0" cy="1.3" r="1.25" fill="#4b4544"/><circle cx="8.700000000000001" cy="1.3" r="1.25" fill="#4b4544"/></svg>
<div class="t" style="left:177.2px;top:649.8px;line-height:18px;height:18px;font:9.3px/18px 'DejaVu Sans', 'Liberation Sans', sans-serif;color:#222;letter-spacing:0.241px;">10:59</div>
<div class="t" style="left:359.2px;top:649.8px;line-height:18px;height:18px;font:9.3px/18px 'DejaVu Sans', 'Liberation Sans', sans-serif;color:#222;letter-spacing:0.408px;">DM_019175</div>
<div class="t" style="left:422.2px;top:649.8px;line-height:18px;height:18px;font:9.3px/18px 'DejaVu Sans', 'Liberation Sans', sans-serif;color:#222;letter-spacing:0.109px;">Moyenne</div>
<svg class="i" style="left:480px;top:654.4px" width="13.4" height="10.6" viewBox="0 0 13 10.6" ><path d="M1 5.6 L4.7 9.1 L12 1.2" fill="none" stroke="#4aae2a" stroke-width="3.1" stroke-linecap="butt" stroke-linejoin="miter"/></svg>
<div class="t" style="left:501px;top:650.5px;line-height:18px;height:18px;font:9.3px/18px 'DejaVu Sans', 'Liberation Sans', sans-serif;color:#555;letter-spacing:0.223px;">Clôturé</div>
<div class="t" style="left:600.2px;top:649.8px;line-height:18px;height:18px;font:9.3px/18px 'DejaVu Sans', 'Liberation Sans', sans-serif;color:#222;letter-spacing:0.592px;">03/02/21 10:59</div>
<div class="t" style="left:685.2px;top:649.8px;line-height:18px;height:18px;font:9.3px/18px 'DejaVu Sans', 'Liberation Sans', sans-serif;color:#222;letter-spacing:0.169px;">COMMANDE ANNULEE CAUSE LOGISTIQUE</div>
</div>
<div class="b" style="left:244.60px;top:171.20px;width:112.90px;height:501.00px;background:#fff;"></div>
</main>
<svg class="i" style="left:0;top:0" width="1514" height="672" viewBox="0 0 1514 672">
<polygon points="365,171.2 403,172.6 429.4,176.8 429.4,204.4 392,203 365,201.4" fill="rgba(0,236,0,0.57)"/>
<polygon points="375,189 422,189 422,219 375,219" fill="rgba(0,236,0,0.57)"/>
<polygon points="384,218.8 440.4,218.8 440.4,248.2 384,248.2" fill="rgba(0,236,0,0.57)"/>
<polygon points="383,239 426,239 426,268.4 383,268.4" fill="rgba(0,236,0,0.57)"/>
<polygon points="382.4,290.6 423.6,290.6 423.6,321.6 382.4,321.6" fill="rgba(0,236,0,0.57)"/>
<polygon points="382.2,321.6 420,321.6 420,351.6 382.2,351.6" fill="rgba(0,236,0,0.57)"/>
<polygon points="382.2,342.4 429.8,342.4 429.8,373 382.2,373" fill="rgba(0,236,0,0.57)"/>
<polygon points="389.6,362.4 429.8,362.4 429.8,394.4 389.6,394.4" fill="rgba(0,236,0,0.57)"/>
<polygon points="384.2,390.6 433,390.6 433,420 384.2,420" fill="rgba(0,236,0,0.57)"/>
<polygon points="394.2,412 429,412 429,442.6 394.2,442.6" fill="rgba(0,236,0,0.57)"/>
<rect x="41.2" y="34.8" width="306.6" height="43" rx="21.5" ry="21.5" fill="none" stroke="#fd2210" stroke-width="6.2"/>
</svg>
<svg class="i" style="left:8.6px;top:619px" width="33" height="33" viewBox="0 0 33 33" ><circle cx="14.2" cy="17.7" r="13.7" fill="#2b2724"/><clipPath id="hc"><path d="M13.6 28 C5 21.6 2.6 17 4.2 13 C5.8 9.2 10.8 8.8 13.6 12.8 C16.4 8.8 21.8 9.2 23.4 13 C25 17 22.4 21.6 13.6 28 Z"/></clipPath><g clip-path="url(#hc)"><rect x="0" y="0" width="33" height="33" fill="#c99a10"/><path d="M-18.6 4 L3.3999999999999986 32" stroke="#5c4406" stroke-width="0.9"/><path d="M-15.5 4 L6.5 32" stroke="#5c4406" stroke-width="0.9"/><path d="M-12.4 4 L9.6 32" stroke="#5c4406" stroke-width="0.9"/><path d="M-9.3 4 L12.7 32" stroke="#5c4406" stroke-width="0.9"/><path d="M-6.2 4 L15.8 32" stroke="#5c4406" stroke-width="0.9"/><path d="M-3.1 4 L18.9 32" stroke="#5c4406" stroke-width="0.9"/><path d="M0.0 4 L22.0 32" stroke="#5c4406" stroke-width="0.9"/><path d="M3.1 4 L25.1 32" stroke="#5c4406" stroke-width="0.9"/><path d="M6.2 4 L28.2 32" stroke="#5c4406" stroke-width="0.9"/><path d="M9.3 4 L31.3 32" stroke="#5c4406" stroke-width="0.9"/><path d="M12.4 4 L34.4 32" stroke="#5c4406" stroke-width="0.9"/><path d="M15.5 4 L37.5 32" stroke="#5c4406" stroke-width="0.9"/><path d="M18.6 4 L40.6 32" stroke="#5c4406" stroke-width="0.9"/><path d="M21.7 4 L43.7 32" stroke="#5c4406" stroke-width="0.9"/><path d="M24.8 4 L46.8 32" stroke="#5c4406" stroke-width="0.9"/><path d="M27.900000000000002 4 L49.900000000000006 32" stroke="#5c4406" stroke-width="0.9"/><path d="M31.0 4 L53.0 32" stroke="#5c4406" stroke-width="0.9"/><path d="M34.1 4 L56.1 32" stroke="#5c4406" stroke-width="0.9"/><path d="M37.2 4 L59.2 32" stroke="#5c4406" stroke-width="0.9"/><path d="M40.300000000000004 4 L62.300000000000004 32" stroke="#5c4406" stroke-width="0.9"/></g><circle cx="25.2" cy="7" r="6.1" fill="#9b1c1c"/><text x="25.2" y="10.2" text-anchor="middle" font-family="Liberation Sans, sans-serif" font-weight="bold" font-size="9" fill="#fff">8</text></svg>
<div class="b" style="left:1382.00px;top:652.00px;width:124.00px;height:22.00px;background:#fff;box-shadow:0 0 4px rgba(0,0,0,.18)"></div>
<svg class="i" style="left:1386.6px;top:655.8px" width="18" height="15" viewBox="0 0 18 15" ><g fill="#fff" stroke="#3b3a44" stroke-width="1.3" stroke-linejoin="round"><path d="M1 5.6 H10 V11.8 H5 L2.6 14 V11.8 H1 Z"/><path d="M7.4 1 H16.8 V7.6 H15 V9.8 L12.4 7.6 H7.4 Z"/></g></svg>
<svg class="i" style="left:1412px;top:654.8px" width="17.4" height="16.4" viewBox="0 0 17.4 16.4" ><g fill="#fff" stroke="#8a8890" stroke-width="1.1"><path d="M6.4 0.8 a5.6 4.6 0 1 1 -3.6 8.2 L0.8 9.8 L1.8 7.6 A5.6 4.6 0 0 1 6.4 0.8 Z"/><path d="M11.4 6.6 a5.4 4.4 0 1 0 3.4 7.8 L16.6 15.4 L15.8 13.2 A5.4 4.4 0 0 0 11.4 6.6 Z"/></g></svg>
<div class="b" style="left:1433.20px;top:656.00px;width:44.60px;height:14.40px;background:#2cbd61;border-radius:7.2px"></div>
<div class="b" style="left:1465.20px;top:657.40px;width:11.60px;height:11.60px;background:#fff;border-radius:50%"></div>
<div class="b" style="left:1483.20px;top:655.20px;width:13.40px;height:14.40px;background:#fff;border:1.5px solid #3b3a44;border-radius:3.5px"></div>
<div class="b" style="left:1511.40px;top:0.00px;width:1.00px;height:672.00px;background:#e4e4e4;"></div>
</body></html>
